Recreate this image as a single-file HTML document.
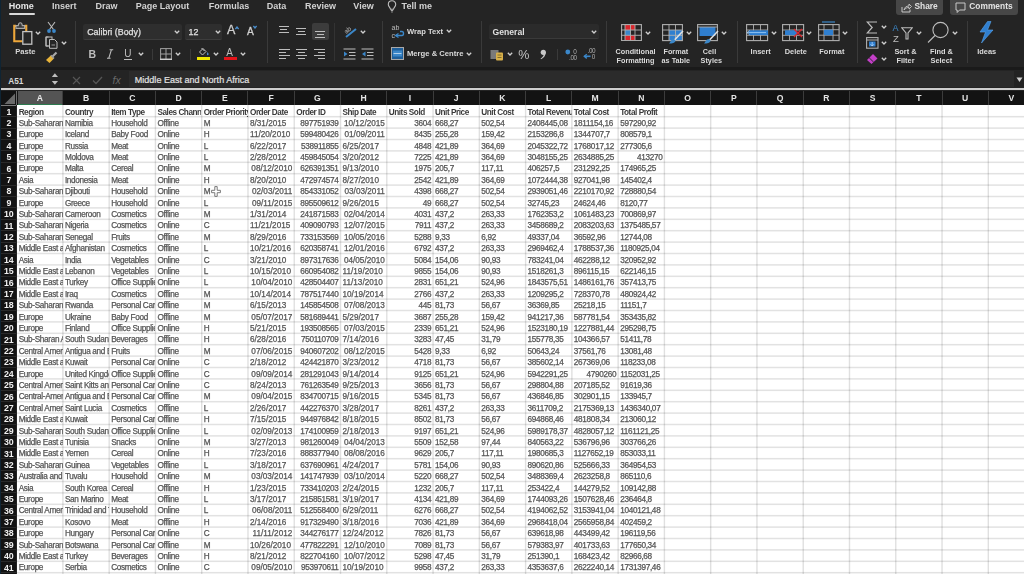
<!DOCTYPE html><html><head><meta charset="utf-8"><style>
*{margin:0;padding:0}
html,body{width:1024px;height:574px;overflow:hidden;background:#242424}
body{position:relative;font-family:"Liberation Sans",sans-serif}
#w{position:absolute;left:0;top:0;width:1030px;height:580px;overflow:hidden;filter:blur(0.3px)}
.r{position:absolute}
.t{position:absolute;white-space:nowrap;line-height:1}
.rh{font-size:8.8px;font-weight:700;color:#f0f0f0;text-align:center;letter-spacing:-0.2px}
.c{position:absolute;width:45.97px;height:11.40px;overflow:hidden;white-space:nowrap;font-size:8.2px;line-height:13.80px;color:#555;-webkit-text-stroke:0.25px #555;padding:0 1.6px 0 2px;box-sizing:border-box;letter-spacing:-0.32px}
.c.n{letter-spacing:-0.3px}
.c.d{letter-spacing:0px}
.c.b{font-weight:700;letter-spacing:-0.45px;color:#3a3a3a;-webkit-text-stroke:0;line-height:15.4px}
.c.rt{text-align:right}
</style></head><body><div id="w">
<div class="r" style="left:-6.00px;top:-6.00px;width:7.30px;height:590.00px;background:#0f2433;"></div>
<div class="t" style="left:8.80px;top:1.88px;font-size:9px;font-weight:700;color:#e6e6e6;">Home</div>
<div class="t" style="left:52.00px;top:1.88px;font-size:9px;font-weight:700;color:#d2d2d2;">Insert</div>
<div class="t" style="left:95.50px;top:1.88px;font-size:9px;font-weight:700;color:#d2d2d2;">Draw</div>
<div class="t" style="left:135.80px;top:1.88px;font-size:9px;font-weight:700;color:#d2d2d2;">Page Layout</div>
<div class="t" style="left:208.80px;top:1.88px;font-size:9px;font-weight:700;color:#d2d2d2;">Formulas</div>
<div class="t" style="left:266.70px;top:1.88px;font-size:9px;font-weight:700;color:#d2d2d2;">Data</div>
<div class="t" style="left:305.00px;top:1.88px;font-size:9px;font-weight:700;color:#d2d2d2;">Review</div>
<div class="t" style="left:353.30px;top:1.88px;font-size:9px;font-weight:700;color:#d2d2d2;">View</div>
<div class="t" style="left:401.60px;top:1.88px;font-size:9px;font-weight:700;color:#d2d2d2;">Tell me</div>
<div class="r" style="left:8.80px;top:12.80px;width:26.70px;height:1.80px;background:#d8d8d8;border-radius:1px"></div>
<svg class="r" style="left:387px;top:0px" width="10" height="13" viewBox="0 0 10 13"><path d="M5 0.8 C2.6 0.8 1.3 2.6 1.3 4.4 C1.3 6.3 3 7.4 3.5 9.2 L6.5 9.2 C7 7.4 8.7 6.3 8.7 4.4 C8.7 2.6 7.4 0.8 5 0.8 Z" fill="none" stroke="#bdbdbd" stroke-width="1.1"/><path d="M3.8 10.6 H6.2 M4.4 12 H5.6" stroke="#bdbdbd" stroke-width="1"/></svg>
<div class="r" style="left:895.50px;top:-3.00px;width:47.10px;height:17.80px;background:#474747;border-radius:3px"></div>
<svg class="r" style="left:901px;top:3px" width="11" height="10" viewBox="0 0 11 10"><path d="M1 4 V9 H9 V6.5" fill="none" stroke="#c8c8c8" stroke-width="1"/><path d="M3 7 C3.5 4.5 5 3 8 3 L8 1 L10.5 3.5 L8 6 L8 4.4 C6 4.4 4.5 5.3 3 7Z" fill="none" stroke="#c8c8c8" stroke-width="0.9"/></svg>
<div class="t" style="left:914.50px;top:2.49px;font-size:8.4px;font-weight:700;color:#e2e2e2;">Share</div>
<div class="r" style="left:949.60px;top:-3.00px;width:68.90px;height:17.80px;background:#474747;border-radius:3px"></div>
<svg class="r" style="left:955px;top:2px" width="11" height="12" viewBox="0 0 11 12"><path d="M1 1 H10 V8 H4.5 L2.2 10.5 V8 H1 Z" fill="none" stroke="#c8c8c8" stroke-width="1"/></svg>
<div class="t" style="left:969.30px;top:2.49px;font-size:8.4px;font-weight:700;color:#e2e2e2;">Comments</div>
<div class="r" style="left:74.50px;top:21.00px;width:1.00px;height:42.00px;background:#3a3a3a;"></div>
<div class="r" style="left:266.80px;top:21.00px;width:1.00px;height:42.00px;background:#3a3a3a;"></div>
<div class="r" style="left:382.30px;top:21.00px;width:1.00px;height:42.00px;background:#3a3a3a;"></div>
<div class="r" style="left:481.40px;top:21.00px;width:1.00px;height:42.00px;background:#3a3a3a;"></div>
<div class="r" style="left:606.30px;top:21.00px;width:1.00px;height:42.00px;background:#3a3a3a;"></div>
<div class="r" style="left:736.60px;top:21.00px;width:1.00px;height:42.00px;background:#3a3a3a;"></div>
<div class="r" style="left:856.70px;top:21.00px;width:1.00px;height:42.00px;background:#3a3a3a;"></div>
<div class="r" style="left:967.20px;top:21.00px;width:1.00px;height:42.00px;background:#3a3a3a;"></div>
<div class="r" style="left:334.20px;top:23.00px;width:1.00px;height:38.00px;background:#333333;"></div>
<div class="r" style="left:152.00px;top:49.00px;width:1.00px;height:11.00px;background:#3a3a3a;"></div>
<div class="r" style="left:189.80px;top:49.00px;width:1.00px;height:11.00px;background:#3a3a3a;"></div>
<div class="r" style="left:557.00px;top:49.00px;width:1.00px;height:11.00px;background:#3a3a3a;"></div>
<svg class="r" style="left:12px;top:21px" width="22" height="25" viewBox="0 0 22 25"><path d="M4 4.9 H2.25 V20.25 H10.5" fill="none" stroke="#eea73a" stroke-width="2.1"/><path d="M12.5 4.9 H14.25 V10.5" fill="none" stroke="#eea73a" stroke-width="2.1"/><path d="M4 7.4 V4.6 H6.3 C6.5 2.6 7.3 1.8 8.3 1.8 C9.3 1.8 10.1 2.6 10.3 4.6 H12.6 V7.4 Z" fill="#3a3a3a" stroke="#a8a8a8" stroke-width="1.1"/><rect x="10.8" y="10.6" width="9" height="12.6" fill="#262626" stroke="#c4c4c4" stroke-width="1.3"/></svg>
<svg class="r" style="left:34.8px;top:31px" width="6" height="4" viewBox="0 0 6 4"><path d="M0.8 0.8 L3 3 L5.2 0.8" fill="none" stroke="#cfcfcf" stroke-width="1.3"/></svg>
<div class="t" style="left:15.20px;top:48.37px;font-size:7.6px;font-weight:700;color:#d6d6d6;">Paste</div>
<svg class="r" style="left:46px;top:21px" width="11" height="13" viewBox="0 0 11 13"><path d="M2 1 L7.5 8.5 M9 1 L3.5 8.5" stroke="#bdbdbd" stroke-width="1.1" fill="none"/><circle cx="3" cy="10" r="1.9" fill="#3b87c9"/><circle cx="8" cy="10" r="1.9" fill="#3b87c9"/></svg>
<svg class="r" style="left:45px;top:36px" width="13" height="13" viewBox="0 0 13 13"><path d="M3.5 1 H1 V10 H3.5" fill="none" stroke="#bdbdbd" stroke-width="1"/><rect x="1" y="1" width="6" height="9" fill="none" stroke="#bdbdbd" stroke-width="1"/><path d="M4.5 3.5 H9.5 L12 6 V12.3 H4.5 Z" fill="#262626" stroke="#bdbdbd" stroke-width="1"/><path d="M6.5 9 H10" stroke="#9a9a9a" stroke-width="1"/></svg>
<svg class="r" style="left:60.6px;top:40.7px" width="6" height="4" viewBox="0 0 6 4"><path d="M0.8 0.8 L3 3 L5.2 0.8" fill="none" stroke="#cfcfcf" stroke-width="1.3"/></svg>
<svg class="r" style="left:45px;top:51px" width="13" height="13" viewBox="0 0 13 13"><path d="M7.5 5.5 L11.5 1.5" stroke="#a8a8a8" stroke-width="2.2"/><path d="M1 9 L6 4.2 L9 7.5 L4.5 12 Z" fill="#e8b43a"/><path d="M6 4.2 L9 7.5" stroke="#9a9a9a" stroke-width="1.5"/></svg>
<div class="r" style="left:82.70px;top:23.80px;width:99.60px;height:16.20px;background:#2e2e2e;border-bottom:1px solid #3d3d3d;box-sizing:border-box;border-radius:2px"></div>
<div class="t" style="left:87.20px;top:27.97px;font-size:8.9px;font-weight:400;color:#e0e0e0;-webkit-text-stroke:0.25px #e0e0e0">Calibri (Body)</div>
<svg class="r" style="left:174.4px;top:30.299999999999997px" width="6" height="4" viewBox="0 0 6 4"><path d="M0.8 0.8 L3 3 L5.2 0.8" fill="none" stroke="#cfcfcf" stroke-width="1.3"/></svg>
<div class="r" style="left:185.20px;top:23.80px;width:37.10px;height:16.20px;background:#2e2e2e;border-bottom:1px solid #3d3d3d;box-sizing:border-box;border-radius:2px"></div>
<div class="t" style="left:188.60px;top:27.97px;font-size:8.9px;font-weight:400;color:#e0e0e0;-webkit-text-stroke:0.25px #e0e0e0">12</div>
<svg class="r" style="left:214.6px;top:30.299999999999997px" width="6" height="4" viewBox="0 0 6 4"><path d="M0.8 0.8 L3 3 L5.2 0.8" fill="none" stroke="#cfcfcf" stroke-width="1.3"/></svg>
<div class="t" style="left:227.00px;top:24.42px;font-size:12.5px;font-weight:400;color:#d0d0d0;-webkit-text-stroke:0.3px #d0d0d0">A</div>
<svg class="r" style="left:234.5px;top:25.5px" width="4" height="4" viewBox="0 0 4 4"><path d="M0.4 3 L2 1 L3.6 3" fill="none" stroke="#4a90d0" stroke-width="1.3"/></svg>
<div class="t" style="left:247.00px;top:26.57px;font-size:10.2px;font-weight:400;color:#d0d0d0;-webkit-text-stroke:0.3px #d0d0d0">A</div>
<svg class="r" style="left:253.3px;top:25.2px" width="4" height="4" viewBox="0 0 4 4"><path d="M0.4 1 L2 3 L3.6 1" fill="none" stroke="#4a90d0" stroke-width="1.3"/></svg>
<div class="t" style="left:88.40px;top:48.91px;font-size:10.5px;font-weight:700;color:#bdbdbd;">B</div>
<svg class="r" style="left:106px;top:49px" width="8" height="10" viewBox="0 0 8 10"><path d="M3.6 0.8 H7.2 M1 9.2 H4.6 M5.4 0.8 L2.8 9.2" fill="none" stroke="#bdbdbd" stroke-width="1.1"/></svg>
<div class="t" style="left:124.30px;top:48.53px;font-size:10px;font-weight:400;color:#bdbdbd;">U</div>
<div class="r" style="left:124.00px;top:58.50px;width:7.50px;height:1.00px;background:#bdbdbd;"></div>
<svg class="r" style="left:137.6px;top:52.3px" width="6" height="4" viewBox="0 0 6 4"><path d="M0.8 0.8 L3 3 L5.2 0.8" fill="none" stroke="#cfcfcf" stroke-width="1.3"/></svg>
<svg class="r" style="left:159.5px;top:48px" width="12" height="12" viewBox="0 0 12 12"><rect x="0.6" y="0.6" width="10.8" height="10.8" fill="none" stroke="#a0a0a0" stroke-width="1"/><path d="M6 0.6 V11.4 M0.6 6 H11.4" stroke="#a0a0a0" stroke-width="1"/><path d="M0 11.3 H12" stroke="#d0d0d0" stroke-width="1.4"/></svg>
<svg class="r" style="left:175.4px;top:52.3px" width="6" height="4" viewBox="0 0 6 4"><path d="M0.8 0.8 L3 3 L5.2 0.8" fill="none" stroke="#cfcfcf" stroke-width="1.3"/></svg>
<svg class="r" style="left:198px;top:47px" width="12" height="10" viewBox="0 0 12 10"><path d="M5 1.5 L1.5 5 L4.5 8 L8 4.5 Z" fill="none" stroke="#bdbdbd" stroke-width="1"/><path d="M3.5 1 L6.5 4" stroke="#bdbdbd" stroke-width="1"/><path d="M9.5 5 C10.5 6.5 11 7.2 10.2 8 C9.6 8.5 8.8 8 9 7 Z" fill="#4f95d8"/></svg>
<div class="r" style="left:197.40px;top:57.00px;width:12.30px;height:3.00px;background:#f0e800;"></div>
<svg class="r" style="left:213.2px;top:52.3px" width="6" height="4" viewBox="0 0 6 4"><path d="M0.8 0.8 L3 3 L5.2 0.8" fill="none" stroke="#cfcfcf" stroke-width="1.3"/></svg>
<div class="t" style="left:226.20px;top:48.03px;font-size:10px;font-weight:400;color:#bdbdbd;">A</div>
<div class="r" style="left:224.00px;top:57.00px;width:13.00px;height:3.00px;background:#e5141a;"></div>
<svg class="r" style="left:240.4px;top:52.3px" width="6" height="4" viewBox="0 0 6 4"><path d="M0.8 0.8 L3 3 L5.2 0.8" fill="none" stroke="#cfcfcf" stroke-width="1.3"/></svg>
<div class="r" style="left:312.20px;top:23.20px;width:16.50px;height:16.50px;background:#3c3c3c;border-radius:2px"></div>
<div class="r" style="left:278.50px;top:25.50px;width:10.00px;height:1.10px;background:#bdbdbd;"></div><div class="r" style="left:280.00px;top:28.70px;width:7.00px;height:1.10px;background:#bdbdbd;"></div><div class="r" style="left:278.50px;top:31.90px;width:10.00px;height:1.10px;background:#bdbdbd;"></div>
<div class="r" style="left:296.00px;top:28.00px;width:10.00px;height:1.10px;background:#bdbdbd;"></div><div class="r" style="left:297.50px;top:31.20px;width:7.00px;height:1.10px;background:#bdbdbd;"></div><div class="r" style="left:296.00px;top:34.40px;width:10.00px;height:1.10px;background:#bdbdbd;"></div>
<div class="r" style="left:315.00px;top:30.50px;width:10.00px;height:1.10px;background:#bdbdbd;"></div><div class="r" style="left:316.50px;top:33.70px;width:7.00px;height:1.10px;background:#bdbdbd;"></div><div class="r" style="left:315.00px;top:36.90px;width:10.00px;height:1.10px;background:#bdbdbd;"></div>
<div class="r" style="left:278.50px;top:48.50px;width:11.00px;height:1.10px;background:#bdbdbd;"></div><div class="r" style="left:278.50px;top:51.70px;width:7.00px;height:1.10px;background:#bdbdbd;"></div><div class="r" style="left:278.50px;top:54.90px;width:11.00px;height:1.10px;background:#bdbdbd;"></div><div class="r" style="left:278.50px;top:58.10px;width:7.00px;height:1.10px;background:#bdbdbd;"></div>
<div class="r" style="left:296.00px;top:48.50px;width:11.00px;height:1.10px;background:#bdbdbd;"></div><div class="r" style="left:298.00px;top:51.70px;width:7.00px;height:1.10px;background:#bdbdbd;"></div><div class="r" style="left:296.00px;top:54.90px;width:11.00px;height:1.10px;background:#bdbdbd;"></div><div class="r" style="left:298.00px;top:58.10px;width:7.00px;height:1.10px;background:#bdbdbd;"></div>
<div class="r" style="left:313.50px;top:48.50px;width:11.00px;height:1.10px;background:#bdbdbd;"></div><div class="r" style="left:317.50px;top:51.70px;width:7.00px;height:1.10px;background:#bdbdbd;"></div><div class="r" style="left:313.50px;top:54.90px;width:11.00px;height:1.10px;background:#bdbdbd;"></div><div class="r" style="left:317.50px;top:58.10px;width:7.00px;height:1.10px;background:#bdbdbd;"></div>
<svg class="r" style="left:343px;top:24px" width="15" height="15" viewBox="0 0 15 15"><text x="1" y="8" font-family="Liberation Sans" font-size="6.5" fill="#bdbdbd" transform="rotate(-40 5 6)">ab</text><path d="M3 13 L13 5" stroke="#3b87c9" stroke-width="2"/></svg>
<svg class="r" style="left:359.5px;top:29.5px" width="6" height="4" viewBox="0 0 6 4"><path d="M0.8 0.8 L3 3 L5.2 0.8" fill="none" stroke="#cfcfcf" stroke-width="1.3"/></svg>
<svg class="r" style="left:343px;top:48px" width="13" height="12" viewBox="0 0 13 12"><path d="M0.5 1 H12.5 M6 4.5 H12.5 M6 7.5 H12.5 M0.5 11 H12.5" stroke="#bdbdbd" stroke-width="1.1"/><path d="M4.5 6 L1 3.5 V8.5Z" fill="#3b87c9"/></svg>
<svg class="r" style="left:361px;top:48px" width="13" height="12" viewBox="0 0 13 12"><path d="M0.5 1 H12.5 M6 4.5 H12.5 M6 7.5 H12.5 M0.5 11 H12.5" stroke="#bdbdbd" stroke-width="1.1"/><path d="M1 6 L4.5 3.5 V8.5Z" fill="#3b87c9"/></svg>
<svg class="r" style="left:391px;top:23px" width="14" height="17" viewBox="0 0 14 17"><text x="0.5" y="7" font-family="Liberation Sans" font-size="7" fill="#bdbdbd">ab</text><text x="0.5" y="15" font-family="Liberation Sans" font-size="7" fill="#bdbdbd">c</text><path d="M5 12.5 H11 C13 12.5 13 8.5 11 8.5 H9" fill="none" stroke="#3b87c9" stroke-width="1.4"/><path d="M7.5 10.5 L4.5 12.5 L7.5 14.5" fill="none" stroke="#3b87c9" stroke-width="1.3"/></svg>
<div class="t" style="left:407.00px;top:27.57px;font-size:7.6px;font-weight:700;color:#dadada;">Wrap Text</div>
<svg class="r" style="left:446px;top:29.2px" width="6" height="4" viewBox="0 0 6 4"><path d="M0.8 0.8 L3 3 L5.2 0.8" fill="none" stroke="#cfcfcf" stroke-width="1.3"/></svg>
<svg class="r" style="left:391px;top:47px" width="13" height="13" viewBox="0 0 13 13"><rect x="0.5" y="0.5" width="12" height="12" fill="#1f5f9a" stroke="#a9a9a9" stroke-width="1"/><rect x="2" y="3.5" width="9" height="6" fill="#3b87c9"/><path d="M2.5 6.5 H10.5" stroke="#cfe3f5" stroke-width="0.8"/></svg>
<div class="t" style="left:407.00px;top:50.22px;font-size:7.65px;font-weight:700;color:#dadada;">Merge &amp; Centre</div>
<svg class="r" style="left:466px;top:52px" width="6" height="4" viewBox="0 0 6 4"><path d="M0.8 0.8 L3 3 L5.2 0.8" fill="none" stroke="#cfcfcf" stroke-width="1.3"/></svg>
<div class="r" style="left:489.00px;top:23.80px;width:110.00px;height:15.40px;background:#2b2b2b;border-bottom:1px solid #3a3a3a;box-sizing:border-box;border-radius:2px"></div>
<div class="t" style="left:492.60px;top:27.52px;font-size:8.6px;font-weight:700;color:#e0e0e0;">General</div>
<svg class="r" style="left:590.5px;top:29.5px" width="6" height="4" viewBox="0 0 6 4"><path d="M0.8 0.8 L3 3 L5.2 0.8" fill="none" stroke="#cfcfcf" stroke-width="1.3"/></svg>
<svg class="r" style="left:490px;top:49px" width="15" height="12" viewBox="0 0 15 12"><rect x="0.5" y="1" width="8" height="9" fill="#7a7a7a"/><rect x="6" y="3.5" width="7" height="8" rx="1" fill="#d8b04a"/><path d="M7.5 6 H11.5 M7.5 8.5 H11.5" stroke="#6b5a20" stroke-width="0.8"/></svg>
<svg class="r" style="left:507px;top:52px" width="6" height="4" viewBox="0 0 6 4"><path d="M0.8 0.8 L3 3 L5.2 0.8" fill="none" stroke="#cfcfcf" stroke-width="1.3"/></svg>
<div class="t" style="left:518.30px;top:48.82px;font-size:12.5px;font-weight:400;color:#c2c2c2;">%</div>
<svg class="r" style="left:539px;top:49px" width="8" height="11" viewBox="0 0 8 11"><circle cx="4.3" cy="3.3" r="2.6" fill="#c8c8c8"/><path d="M6.6 3.3 C6.8 6.5 5 9 2 10.3 L1.6 9.4 C3.8 8.2 4.8 6.5 4.8 4.5 Z" fill="#c8c8c8"/></svg>
<svg class="r" style="left:564px;top:48px" width="15" height="13" viewBox="0 0 15 13"><circle cx="3.8" cy="4" r="2.4" fill="#3b87c9"/><text x="9.2" y="6.2" font-family="Liberation Sans" font-size="6.4" fill="#b0b0b0">0</text><text x="5" y="11.6" font-family="Liberation Sans" font-size="6.4" fill="#b0b0b0" letter-spacing="-0.4">.00</text></svg>
<svg class="r" style="left:583px;top:47px" width="15" height="14" viewBox="0 0 15 14"><text x="4.5" y="6.4" font-family="Liberation Sans" font-size="6.4" fill="#b0b0b0" letter-spacing="-0.4">.00</text><text x="8.8" y="12" font-family="Liberation Sans" font-size="6.4" fill="#b0b0b0">0</text><path d="M1.5 9.3 H7.5" stroke="#3b87c9" stroke-width="1.6"/><path d="M3.8 7.2 L1.3 9.3 L3.8 11.4" fill="none" stroke="#3b87c9" stroke-width="1.4"/></svg>
<svg class="r" style="left:620.5px;top:24px" width="21" height="17" viewBox="0 0 21 17"><rect x="4" y="1" width="10" height="5" fill="#d9262c"/><rect x="4" y="11.3" width="10" height="5" fill="#d9262c"/><rect x="4" y="6" width="5.5" height="5.3" fill="#3b87c9"/><rect x="0.6" y="0.6" width="19.8" height="16" fill="none" stroke="#b0b0b0" stroke-width="1.1"/><path d="M4 0.6 V16.6 M9.5 0.6 V16.6 M14 0.6 V16.6 M0.6 6 H20.4 M0.6 11.3 H20.4" stroke="#b0b0b0" stroke-width="0.9"/></svg>
<svg class="r" style="left:645px;top:31px" width="6" height="4" viewBox="0 0 6 4"><path d="M0.8 0.8 L3 3 L5.2 0.8" fill="none" stroke="#cfcfcf" stroke-width="1.3"/></svg>
<div class="t" style="left:575.50px;width:120px;text-align:center;top:48.36px;font-size:7.25px;font-weight:700;color:#dadada;">Conditional</div>
<div class="t" style="left:575.50px;width:120px;text-align:center;top:56.66px;font-size:7.25px;font-weight:700;color:#dadada;">Formatting</div>
<svg class="r" style="left:661.5px;top:24px" width="23" height="21" viewBox="0 0 23 21"><rect x="7" y="6" width="13" height="10.6" fill="#2f7fd0"/><rect x="0.6" y="0.6" width="19.8" height="16" fill="none" stroke="#b0b0b0" stroke-width="1.1"/><path d="M7 0.6 V16.6 M13.5 0.6 V16.6 M0.6 6 H20.4 M0.6 11.3 H20.4" stroke="#b0b0b0" stroke-width="0.9"/><path d="M21 7 L12.5 16" stroke="#e0e0e0" stroke-width="1.6"/><path d="M12 15 C9 15 8.5 18 7 19.5 C10 19.5 13.5 19 13.5 16.5 Z" fill="#3b87c9"/></svg>
<svg class="r" style="left:686px;top:31px" width="6" height="4" viewBox="0 0 6 4"><path d="M0.8 0.8 L3 3 L5.2 0.8" fill="none" stroke="#cfcfcf" stroke-width="1.3"/></svg>
<div class="t" style="left:615.80px;width:120px;text-align:center;top:48.36px;font-size:7.25px;font-weight:700;color:#dadada;">Format</div>
<div class="t" style="left:615.80px;width:120px;text-align:center;top:56.66px;font-size:7.25px;font-weight:700;color:#dadada;">as Table</div>
<svg class="r" style="left:697px;top:24px" width="23" height="21" viewBox="0 0 23 21"><rect x="2.5" y="3" width="16" height="9" fill="#2f7fd0"/><rect x="0.6" y="0.6" width="19.8" height="16" fill="none" stroke="#b0b0b0" stroke-width="1.1"/><path d="M0.6 3 H20.4" stroke="#b0b0b0" stroke-width="0.9"/><path d="M21 7 L12.5 16" stroke="#e0e0e0" stroke-width="1.6"/><path d="M12 15 C9 15 8.5 18 7 19.5 C10 19.5 13.5 19 13.5 16.5 Z" fill="#3b87c9"/></svg>
<svg class="r" style="left:721px;top:31px" width="6" height="4" viewBox="0 0 6 4"><path d="M0.8 0.8 L3 3 L5.2 0.8" fill="none" stroke="#cfcfcf" stroke-width="1.3"/></svg>
<div class="t" style="left:649.50px;width:120px;text-align:center;top:48.36px;font-size:7.25px;font-weight:700;color:#dadada;">Cell</div>
<div class="t" style="left:651.30px;width:120px;text-align:center;top:56.66px;font-size:7.25px;font-weight:700;color:#dadada;">Styles</div>
<svg class="r" style="left:745.7px;top:24px" width="23" height="18" viewBox="0 0 23 18"><rect x="0.6" y="0.6" width="21" height="16" fill="none" stroke="#b0b0b0" stroke-width="1.1"/><path d="M7.5 0.6 V16.6 M14.5 0.6 V16.6 M0.6 6 H21.6 M0.6 11.3 H21.6" stroke="#b0b0b0" stroke-width="0.9"/><rect x="3" y="6.3" width="19" height="4.8" fill="#2f7fd0"/><path d="M1 8.6 H20" stroke="#9ccaf5" stroke-width="0.9"/><path d="M3.5 6.5 L1 8.6 L3.5 10.7" fill="none" stroke="#9ccaf5" stroke-width="0.9"/></svg>
<svg class="r" style="left:771px;top:31px" width="6" height="4" viewBox="0 0 6 4"><path d="M0.8 0.8 L3 3 L5.2 0.8" fill="none" stroke="#cfcfcf" stroke-width="1.3"/></svg>
<div class="t" style="left:700.70px;width:120px;text-align:center;top:48.24px;font-size:7.4px;font-weight:700;color:#dadada;">Insert</div>
<svg class="r" style="left:782px;top:24px" width="23" height="18" viewBox="0 0 23 18"><rect x="0.6" y="0.6" width="21" height="16" fill="none" stroke="#b0b0b0" stroke-width="1.1"/><path d="M7.5 0.6 V16.6 M14.5 0.6 V16.6 M0.6 6 H21.6 M0.6 11.3 H21.6" stroke="#b0b0b0" stroke-width="0.9"/><rect x="3" y="6.3" width="12" height="4.8" fill="#2f7fd0"/><path d="M12 5 L20 13 M20 5 L12 13" stroke="#d9262c" stroke-width="1.4"/></svg>
<svg class="r" style="left:806px;top:31px" width="6" height="4" viewBox="0 0 6 4"><path d="M0.8 0.8 L3 3 L5.2 0.8" fill="none" stroke="#cfcfcf" stroke-width="1.3"/></svg>
<div class="t" style="left:735.80px;width:120px;text-align:center;top:48.24px;font-size:7.4px;font-weight:700;color:#dadada;">Delete</div>
<svg class="r" style="left:817.5px;top:21px" width="22" height="21" viewBox="0 0 22 21"><path d="M4 1 H17" stroke="#3b87c9" stroke-width="1.2"/><rect x="0.6" y="3.6" width="20.5" height="16" fill="none" stroke="#b0b0b0" stroke-width="1.1"/><path d="M6 3.6 V19.6 M15 3.6 V19.6 M0.6 8.7 H21.1 M0.6 14.2 H21.1" stroke="#b0b0b0" stroke-width="0.9"/><rect x="6" y="8.7" width="9" height="5.5" fill="#2f7fd0"/></svg>
<svg class="r" style="left:842px;top:31px" width="6" height="4" viewBox="0 0 6 4"><path d="M0.8 0.8 L3 3 L5.2 0.8" fill="none" stroke="#cfcfcf" stroke-width="1.3"/></svg>
<div class="t" style="left:771.90px;width:120px;text-align:center;top:48.24px;font-size:7.4px;font-weight:700;color:#dadada;">Format</div>
<svg class="r" style="left:866px;top:20.5px" width="12" height="13" viewBox="0 0 12 13"><path d="M11 1 H1.2 L6.2 6.5 L1.2 12 H11" fill="none" stroke="#bdbdbd" stroke-width="1.2" stroke-linejoin="miter"/></svg>
<svg class="r" style="left:881px;top:25px" width="6" height="4" viewBox="0 0 6 4"><path d="M0.8 0.8 L3 3 L5.2 0.8" fill="none" stroke="#cfcfcf" stroke-width="1.3"/></svg>
<svg class="r" style="left:866px;top:37px" width="13" height="12" viewBox="0 0 13 12"><rect x="0.6" y="0.6" width="11.4" height="10.6" fill="none" stroke="#b0b0b0" stroke-width="1.1"/><path d="M0.6 3 H12" stroke="#b0b0b0" stroke-width="1"/><rect x="3" y="4.5" width="6.5" height="5" fill="#2f7fd0"/><path d="M6.2 5 V9 M4.5 7.2 L6.2 9 L8 7.2" stroke="#bfe0ff" stroke-width="0.7" fill="none"/></svg>
<svg class="r" style="left:881px;top:41px" width="6" height="4" viewBox="0 0 6 4"><path d="M0.8 0.8 L3 3 L5.2 0.8" fill="none" stroke="#cfcfcf" stroke-width="1.3"/></svg>
<svg class="r" style="left:865.5px;top:52px" width="13" height="12" viewBox="0 0 13 12"><path d="M1 8 L7 2 L11.5 6.5 L5.5 12 Z" fill="#c43fc8"/><path d="M3.2 5.8 L7.7 10.2" stroke="#262626" stroke-width="0.9"/></svg>
<svg class="r" style="left:881px;top:57px" width="6" height="4" viewBox="0 0 6 4"><path d="M0.8 0.8 L3 3 L5.2 0.8" fill="none" stroke="#cfcfcf" stroke-width="1.3"/></svg>
<div class="t" style="left:892.50px;top:23.58px;font-size:9px;font-weight:400;color:#3b87c9;">A</div>
<div class="t" style="left:893.00px;top:34.16px;font-size:9.5px;font-weight:400;color:#bdbdbd;">Z</div>
<svg class="r" style="left:900.5px;top:27px" width="12" height="13" viewBox="0 0 12 13"><path d="M0.8 0.8 H11.2 L7 6 V12 H5 V6 Z" fill="none" stroke="#bdbdbd" stroke-width="1.1"/></svg>
<svg class="r" style="left:916px;top:31px" width="6" height="4" viewBox="0 0 6 4"><path d="M0.8 0.8 L3 3 L5.2 0.8" fill="none" stroke="#cfcfcf" stroke-width="1.3"/></svg>
<div class="t" style="left:845.50px;width:120px;text-align:center;top:48.24px;font-size:7.4px;font-weight:700;color:#dadada;">Sort &amp;</div>
<div class="t" style="left:845.50px;width:120px;text-align:center;top:56.54px;font-size:7.4px;font-weight:700;color:#dadada;">Filter</div>
<svg class="r" style="left:926px;top:21px" width="24" height="24" viewBox="0 0 24 24"><circle cx="14.5" cy="9" r="7.6" fill="none" stroke="#bdbdbd" stroke-width="1.1"/><path d="M9 14.5 L2 21.5" stroke="#bdbdbd" stroke-width="1.1"/></svg>
<svg class="r" style="left:952px;top:31px" width="6" height="4" viewBox="0 0 6 4"><path d="M0.8 0.8 L3 3 L5.2 0.8" fill="none" stroke="#cfcfcf" stroke-width="1.3"/></svg>
<div class="t" style="left:881.40px;width:120px;text-align:center;top:48.24px;font-size:7.4px;font-weight:700;color:#dadada;">Find &amp;</div>
<div class="t" style="left:881.40px;width:120px;text-align:center;top:56.54px;font-size:7.4px;font-weight:700;color:#dadada;">Select</div>
<svg class="r" style="left:978px;top:21px" width="17" height="23" viewBox="0 0 17 23"><path d="M9.5 0.5 L2 11 H7.5 L3.5 22 L15 9 H9.5 L13 0.5 Z" fill="#2f7fd0"/><path d="M9.5 0.5 L2 11 H7.5 L3.5 22 L15 9 H9.5 L13 0.5 Z" fill="none" stroke="#5aa6ec" stroke-width="0.6"/></svg>
<div class="t" style="left:926.70px;width:120px;text-align:center;top:48.24px;font-size:7.4px;font-weight:700;color:#dadada;">Ideas</div>
<div class="r" style="left:1.30px;top:66.80px;width:1023.00px;height:3.60px;background:#1a1a1a;"></div>
<div class="r" style="left:1.30px;top:70.40px;width:1023.00px;height:18.00px;background:#242424;"></div>
<div class="t" style="left:8.20px;top:76.57px;font-size:8.3px;font-weight:700;color:#d8d8d8;">A51</div>
<svg class="r" style="left:51px;top:72px" width="8" height="14" viewBox="0 0 8 14"><path d="M0.8 5 L3.9 1.2 L7 5 Z" fill="#bdbdbd"/><path d="M0.8 9 L3.9 12.8 L7 9 Z" fill="#bdbdbd"/></svg>
<svg class="r" style="left:71.5px;top:75.5px" width="9" height="9" viewBox="0 0 9 9"><path d="M1 1 L8 8 M8 1 L1 8" stroke="#555" stroke-width="1.2"/></svg>
<svg class="r" style="left:91.5px;top:75.5px" width="11" height="9" viewBox="0 0 11 9"><path d="M1 4.5 L4 7.5 L10 1" fill="none" stroke="#555" stroke-width="1.3"/></svg>
<div class="t" style="left:112.60px;top:75.11px;font-size:10.5px;font-weight:400;color:#6a6a6a;font-family:"Liberation Serif""><i>fx</i></div>
<div class="r" style="left:129.30px;top:70.80px;width:885.00px;height:16.60px;background:#2b2b2b;"></div>
<div class="t" style="left:134.80px;top:75.75px;font-size:9.04px;font-weight:400;color:#e2e2e2;-webkit-text-stroke:0.2px #e2e2e2">Middle East and North Africa</div>
<div class="r" style="left:1014.20px;top:70.80px;width:9.80px;height:16.60px;background:#232323;"></div>
<svg class="r" style="left:1016px;top:77px" width="7" height="6" viewBox="0 0 7 6"><path d="M0.5 0.5 H6.5 L3.5 5 Z" fill="#cfcfcf"/></svg>
<div class="r" style="left:1.30px;top:88.40px;width:1023.00px;height:2.10px;background:#cdcdcd;"></div>
<div class="r" style="left:1.30px;top:90.50px;width:1023.00px;height:14.80px;background:#131313;"></div>
<div class="r" style="left:17.50px;top:90.50px;width:45.40px;height:13.30px;background:#545454;"></div>
<div class="r" style="left:17.50px;top:103.60px;width:45.40px;height:2.00px;background:#2d7a4f;"></div>
<svg class="r" style="left:1.3px;top:90.5px" width="15" height="14.5" viewBox="0 0 15 14.5"><path d="M3.5 13 L14 2.5 V13 Z" fill="#6a6a6a"/></svg>
<div class="r" style="left:16.20px;top:90.50px;width:1.30px;height:14.80px;background:#6d6d6d;"></div>
<div class="t" style="left:-20.23px;width:120px;text-align:center;top:94.32px;font-size:8.6px;font-weight:700;color:#e8e8e8;">A</div>
<div class="r" style="left:62.40px;top:90.50px;width:1.00px;height:14.80px;background:#3c3c3c;"></div>
<div class="t" style="left:26.04px;width:120px;text-align:center;top:94.32px;font-size:8.6px;font-weight:700;color:#e4e4e4;">B</div>
<div class="r" style="left:108.67px;top:90.50px;width:1.00px;height:14.80px;background:#3c3c3c;"></div>
<div class="t" style="left:72.31px;width:120px;text-align:center;top:94.32px;font-size:8.6px;font-weight:700;color:#e4e4e4;">C</div>
<div class="r" style="left:154.94px;top:90.50px;width:1.00px;height:14.80px;background:#3c3c3c;"></div>
<div class="t" style="left:118.57px;width:120px;text-align:center;top:94.32px;font-size:8.6px;font-weight:700;color:#e4e4e4;">D</div>
<div class="r" style="left:201.21px;top:90.50px;width:1.00px;height:14.80px;background:#3c3c3c;"></div>
<div class="t" style="left:164.84px;width:120px;text-align:center;top:94.32px;font-size:8.6px;font-weight:700;color:#e4e4e4;">E</div>
<div class="r" style="left:247.48px;top:90.50px;width:1.00px;height:14.80px;background:#3c3c3c;"></div>
<div class="t" style="left:211.12px;width:120px;text-align:center;top:94.32px;font-size:8.6px;font-weight:700;color:#e4e4e4;">F</div>
<div class="r" style="left:293.75px;top:90.50px;width:1.00px;height:14.80px;background:#3c3c3c;"></div>
<div class="t" style="left:257.38px;width:120px;text-align:center;top:94.32px;font-size:8.6px;font-weight:700;color:#e4e4e4;">G</div>
<div class="r" style="left:340.02px;top:90.50px;width:1.00px;height:14.80px;background:#3c3c3c;"></div>
<div class="t" style="left:303.66px;width:120px;text-align:center;top:94.32px;font-size:8.6px;font-weight:700;color:#e4e4e4;">H</div>
<div class="r" style="left:386.29px;top:90.50px;width:1.00px;height:14.80px;background:#3c3c3c;"></div>
<div class="t" style="left:349.93px;width:120px;text-align:center;top:94.32px;font-size:8.6px;font-weight:700;color:#e4e4e4;">I</div>
<div class="r" style="left:432.56px;top:90.50px;width:1.00px;height:14.80px;background:#3c3c3c;"></div>
<div class="t" style="left:396.19px;width:120px;text-align:center;top:94.32px;font-size:8.6px;font-weight:700;color:#e4e4e4;">J</div>
<div class="r" style="left:478.83px;top:90.50px;width:1.00px;height:14.80px;background:#3c3c3c;"></div>
<div class="t" style="left:442.47px;width:120px;text-align:center;top:94.32px;font-size:8.6px;font-weight:700;color:#e4e4e4;">K</div>
<div class="r" style="left:525.10px;top:90.50px;width:1.00px;height:14.80px;background:#3c3c3c;"></div>
<div class="t" style="left:488.74px;width:120px;text-align:center;top:94.32px;font-size:8.6px;font-weight:700;color:#e4e4e4;">L</div>
<div class="r" style="left:571.37px;top:90.50px;width:1.00px;height:14.80px;background:#3c3c3c;"></div>
<div class="t" style="left:535.00px;width:120px;text-align:center;top:94.32px;font-size:8.6px;font-weight:700;color:#e4e4e4;">M</div>
<div class="r" style="left:617.64px;top:90.50px;width:1.00px;height:14.80px;background:#3c3c3c;"></div>
<div class="t" style="left:581.27px;width:120px;text-align:center;top:94.32px;font-size:8.6px;font-weight:700;color:#e4e4e4;">N</div>
<div class="r" style="left:663.91px;top:90.50px;width:1.00px;height:14.80px;background:#3c3c3c;"></div>
<div class="t" style="left:627.55px;width:120px;text-align:center;top:94.32px;font-size:8.6px;font-weight:700;color:#e4e4e4;">O</div>
<div class="r" style="left:710.18px;top:90.50px;width:1.00px;height:14.80px;background:#3c3c3c;"></div>
<div class="t" style="left:673.82px;width:120px;text-align:center;top:94.32px;font-size:8.6px;font-weight:700;color:#e4e4e4;">P</div>
<div class="r" style="left:756.45px;top:90.50px;width:1.00px;height:14.80px;background:#3c3c3c;"></div>
<div class="t" style="left:720.09px;width:120px;text-align:center;top:94.32px;font-size:8.6px;font-weight:700;color:#e4e4e4;">Q</div>
<div class="r" style="left:802.72px;top:90.50px;width:1.00px;height:14.80px;background:#3c3c3c;"></div>
<div class="t" style="left:766.36px;width:120px;text-align:center;top:94.32px;font-size:8.6px;font-weight:700;color:#e4e4e4;">R</div>
<div class="r" style="left:848.99px;top:90.50px;width:1.00px;height:14.80px;background:#3c3c3c;"></div>
<div class="t" style="left:812.62px;width:120px;text-align:center;top:94.32px;font-size:8.6px;font-weight:700;color:#e4e4e4;">S</div>
<div class="r" style="left:895.26px;top:90.50px;width:1.00px;height:14.80px;background:#3c3c3c;"></div>
<div class="t" style="left:858.90px;width:120px;text-align:center;top:94.32px;font-size:8.6px;font-weight:700;color:#e4e4e4;">T</div>
<div class="r" style="left:941.53px;top:90.50px;width:1.00px;height:14.80px;background:#3c3c3c;"></div>
<div class="t" style="left:905.17px;width:120px;text-align:center;top:94.32px;font-size:8.6px;font-weight:700;color:#e4e4e4;">U</div>
<div class="r" style="left:987.80px;top:90.50px;width:1.00px;height:14.80px;background:#3c3c3c;"></div>
<div class="t" style="left:951.44px;width:120px;text-align:center;top:94.32px;font-size:8.6px;font-weight:700;color:#e4e4e4;">V</div>
<div class="r" style="left:1034.07px;top:90.50px;width:1.00px;height:14.80px;background:#3c3c3c;"></div>
<div class="r" style="left:16.50px;top:105.30px;width:1024.00px;height:474.70px;background:#ffffff;"></div>
<div class="r" style="left:1.30px;top:105.30px;width:15.20px;height:474.70px;background:#131313;"></div>
<div class="r" style="left:1.30px;top:105.10px;width:15.00px;height:1.20px;background:#7a7a7a;"></div>
<div class="t rh" style="left:1.3px;width:15px;top:107.60px">1</div>
<div class="r" style="left:1.30px;top:116.20px;width:15.00px;height:1.00px;background:#2a2a2a;"></div>
<div class="t rh" style="left:1.3px;width:15px;top:119.00px">2</div>
<div class="r" style="left:1.30px;top:127.60px;width:15.00px;height:1.00px;background:#2a2a2a;"></div>
<div class="t rh" style="left:1.3px;width:15px;top:130.40px">3</div>
<div class="r" style="left:1.30px;top:139.00px;width:15.00px;height:1.00px;background:#2a2a2a;"></div>
<div class="t rh" style="left:1.3px;width:15px;top:141.80px">4</div>
<div class="r" style="left:1.30px;top:150.40px;width:15.00px;height:1.00px;background:#2a2a2a;"></div>
<div class="t rh" style="left:1.3px;width:15px;top:153.20px">5</div>
<div class="r" style="left:1.30px;top:161.80px;width:15.00px;height:1.00px;background:#2a2a2a;"></div>
<div class="t rh" style="left:1.3px;width:15px;top:164.60px">6</div>
<div class="r" style="left:1.30px;top:173.20px;width:15.00px;height:1.00px;background:#2a2a2a;"></div>
<div class="t rh" style="left:1.3px;width:15px;top:176.00px">7</div>
<div class="r" style="left:1.30px;top:184.60px;width:15.00px;height:1.00px;background:#2a2a2a;"></div>
<div class="t rh" style="left:1.3px;width:15px;top:187.40px">8</div>
<div class="r" style="left:1.30px;top:196.00px;width:15.00px;height:1.00px;background:#2a2a2a;"></div>
<div class="t rh" style="left:1.3px;width:15px;top:198.80px">9</div>
<div class="r" style="left:1.30px;top:207.40px;width:15.00px;height:1.00px;background:#2a2a2a;"></div>
<div class="t rh" style="left:1.3px;width:15px;top:210.20px">10</div>
<div class="r" style="left:1.30px;top:218.80px;width:15.00px;height:1.00px;background:#2a2a2a;"></div>
<div class="t rh" style="left:1.3px;width:15px;top:221.60px">11</div>
<div class="r" style="left:1.30px;top:230.20px;width:15.00px;height:1.00px;background:#2a2a2a;"></div>
<div class="t rh" style="left:1.3px;width:15px;top:233.00px">12</div>
<div class="r" style="left:1.30px;top:241.60px;width:15.00px;height:1.00px;background:#2a2a2a;"></div>
<div class="t rh" style="left:1.3px;width:15px;top:244.40px">13</div>
<div class="r" style="left:1.30px;top:253.00px;width:15.00px;height:1.00px;background:#2a2a2a;"></div>
<div class="t rh" style="left:1.3px;width:15px;top:255.80px">14</div>
<div class="r" style="left:1.30px;top:264.40px;width:15.00px;height:1.00px;background:#2a2a2a;"></div>
<div class="t rh" style="left:1.3px;width:15px;top:267.20px">15</div>
<div class="r" style="left:1.30px;top:275.80px;width:15.00px;height:1.00px;background:#2a2a2a;"></div>
<div class="t rh" style="left:1.3px;width:15px;top:278.60px">16</div>
<div class="r" style="left:1.30px;top:287.20px;width:15.00px;height:1.00px;background:#2a2a2a;"></div>
<div class="t rh" style="left:1.3px;width:15px;top:290.00px">17</div>
<div class="r" style="left:1.30px;top:298.60px;width:15.00px;height:1.00px;background:#2a2a2a;"></div>
<div class="t rh" style="left:1.3px;width:15px;top:301.40px">18</div>
<div class="r" style="left:1.30px;top:310.00px;width:15.00px;height:1.00px;background:#2a2a2a;"></div>
<div class="t rh" style="left:1.3px;width:15px;top:312.80px">19</div>
<div class="r" style="left:1.30px;top:321.40px;width:15.00px;height:1.00px;background:#2a2a2a;"></div>
<div class="t rh" style="left:1.3px;width:15px;top:324.20px">20</div>
<div class="r" style="left:1.30px;top:332.80px;width:15.00px;height:1.00px;background:#2a2a2a;"></div>
<div class="t rh" style="left:1.3px;width:15px;top:335.60px">21</div>
<div class="r" style="left:1.30px;top:344.20px;width:15.00px;height:1.00px;background:#2a2a2a;"></div>
<div class="t rh" style="left:1.3px;width:15px;top:347.00px">22</div>
<div class="r" style="left:1.30px;top:355.60px;width:15.00px;height:1.00px;background:#2a2a2a;"></div>
<div class="t rh" style="left:1.3px;width:15px;top:358.40px">23</div>
<div class="r" style="left:1.30px;top:367.00px;width:15.00px;height:1.00px;background:#2a2a2a;"></div>
<div class="t rh" style="left:1.3px;width:15px;top:369.80px">24</div>
<div class="r" style="left:1.30px;top:378.40px;width:15.00px;height:1.00px;background:#2a2a2a;"></div>
<div class="t rh" style="left:1.3px;width:15px;top:381.20px">25</div>
<div class="r" style="left:1.30px;top:389.80px;width:15.00px;height:1.00px;background:#2a2a2a;"></div>
<div class="t rh" style="left:1.3px;width:15px;top:392.60px">26</div>
<div class="r" style="left:1.30px;top:401.20px;width:15.00px;height:1.00px;background:#2a2a2a;"></div>
<div class="t rh" style="left:1.3px;width:15px;top:404.00px">27</div>
<div class="r" style="left:1.30px;top:412.60px;width:15.00px;height:1.00px;background:#2a2a2a;"></div>
<div class="t rh" style="left:1.3px;width:15px;top:415.40px">28</div>
<div class="r" style="left:1.30px;top:424.00px;width:15.00px;height:1.00px;background:#2a2a2a;"></div>
<div class="t rh" style="left:1.3px;width:15px;top:426.80px">29</div>
<div class="r" style="left:1.30px;top:435.40px;width:15.00px;height:1.00px;background:#2a2a2a;"></div>
<div class="t rh" style="left:1.3px;width:15px;top:438.20px">30</div>
<div class="r" style="left:1.30px;top:446.80px;width:15.00px;height:1.00px;background:#2a2a2a;"></div>
<div class="t rh" style="left:1.3px;width:15px;top:449.60px">31</div>
<div class="r" style="left:1.30px;top:458.20px;width:15.00px;height:1.00px;background:#2a2a2a;"></div>
<div class="t rh" style="left:1.3px;width:15px;top:461.00px">32</div>
<div class="r" style="left:1.30px;top:469.60px;width:15.00px;height:1.00px;background:#2a2a2a;"></div>
<div class="t rh" style="left:1.3px;width:15px;top:472.40px">33</div>
<div class="r" style="left:1.30px;top:481.00px;width:15.00px;height:1.00px;background:#2a2a2a;"></div>
<div class="t rh" style="left:1.3px;width:15px;top:483.80px">34</div>
<div class="r" style="left:1.30px;top:492.40px;width:15.00px;height:1.00px;background:#2a2a2a;"></div>
<div class="t rh" style="left:1.3px;width:15px;top:495.20px">35</div>
<div class="r" style="left:1.30px;top:503.80px;width:15.00px;height:1.00px;background:#2a2a2a;"></div>
<div class="t rh" style="left:1.3px;width:15px;top:506.60px">36</div>
<div class="r" style="left:1.30px;top:515.20px;width:15.00px;height:1.00px;background:#2a2a2a;"></div>
<div class="t rh" style="left:1.3px;width:15px;top:518.00px">37</div>
<div class="r" style="left:1.30px;top:526.60px;width:15.00px;height:1.00px;background:#2a2a2a;"></div>
<div class="t rh" style="left:1.3px;width:15px;top:529.40px">38</div>
<div class="r" style="left:1.30px;top:538.00px;width:15.00px;height:1.00px;background:#2a2a2a;"></div>
<div class="t rh" style="left:1.3px;width:15px;top:540.80px">39</div>
<div class="r" style="left:1.30px;top:549.40px;width:15.00px;height:1.00px;background:#2a2a2a;"></div>
<div class="t rh" style="left:1.3px;width:15px;top:552.20px">40</div>
<div class="r" style="left:1.30px;top:560.80px;width:15.00px;height:1.00px;background:#2a2a2a;"></div>
<div class="t rh" style="left:1.3px;width:15px;top:563.60px">41</div>
<div class="r" style="left:1.30px;top:572.20px;width:15.00px;height:1.00px;background:#2a2a2a;"></div>
<div class="t rh" style="left:1.3px;width:15px;top:575.00px">42</div>
<div class="r" style="left:1.30px;top:583.60px;width:15.00px;height:1.00px;background:#2a2a2a;"></div>
<div class="t rh" style="left:1.3px;width:15px;top:586.40px">43</div>
<div class="r" style="left:16.63px;top:115.00px;width:1030.00px;height:1.00px;background:rgba(0,0,0,0.006);"></div>
<div class="r" style="left:16.63px;top:116.00px;width:1030.00px;height:1.00px;background:rgba(0,0,0,0.114);"></div>
<div class="r" style="left:16.63px;top:117.00px;width:1030.00px;height:1.00px;background:rgba(0,0,0,0.051);"></div>
<div class="r" style="left:16.63px;top:127.00px;width:1030.00px;height:1.00px;background:rgba(0,0,0,0.074);"></div>
<div class="r" style="left:16.63px;top:128.00px;width:1030.00px;height:1.00px;background:rgba(0,0,0,0.097);"></div>
<div class="r" style="left:16.63px;top:138.00px;width:1030.00px;height:1.00px;background:rgba(0,0,0,0.028);"></div>
<div class="r" style="left:16.63px;top:139.00px;width:1030.00px;height:1.00px;background:rgba(0,0,0,0.114);"></div>
<div class="r" style="left:16.63px;top:140.00px;width:1030.00px;height:1.00px;background:rgba(0,0,0,0.028);"></div>
<div class="r" style="left:16.63px;top:150.00px;width:1030.00px;height:1.00px;background:rgba(0,0,0,0.097);"></div>
<div class="r" style="left:16.63px;top:151.00px;width:1030.00px;height:1.00px;background:rgba(0,0,0,0.074);"></div>
<div class="r" style="left:16.63px;top:161.00px;width:1030.00px;height:1.00px;background:rgba(0,0,0,0.051);"></div>
<div class="r" style="left:16.63px;top:162.00px;width:1030.00px;height:1.00px;background:rgba(0,0,0,0.114);"></div>
<div class="r" style="left:16.63px;top:163.00px;width:1030.00px;height:1.00px;background:rgba(0,0,0,0.006);"></div>
<div class="r" style="left:16.63px;top:172.00px;width:1030.00px;height:1.00px;background:rgba(0,0,0,0.006);"></div>
<div class="r" style="left:16.63px;top:173.00px;width:1030.00px;height:1.00px;background:rgba(0,0,0,0.114);"></div>
<div class="r" style="left:16.63px;top:174.00px;width:1030.00px;height:1.00px;background:rgba(0,0,0,0.051);"></div>
<div class="r" style="left:16.63px;top:184.00px;width:1030.00px;height:1.00px;background:rgba(0,0,0,0.074);"></div>
<div class="r" style="left:16.63px;top:185.00px;width:1030.00px;height:1.00px;background:rgba(0,0,0,0.097);"></div>
<div class="r" style="left:16.63px;top:195.00px;width:1030.00px;height:1.00px;background:rgba(0,0,0,0.028);"></div>
<div class="r" style="left:16.63px;top:196.00px;width:1030.00px;height:1.00px;background:rgba(0,0,0,0.114);"></div>
<div class="r" style="left:16.63px;top:197.00px;width:1030.00px;height:1.00px;background:rgba(0,0,0,0.028);"></div>
<div class="r" style="left:16.63px;top:207.00px;width:1030.00px;height:1.00px;background:rgba(0,0,0,0.097);"></div>
<div class="r" style="left:16.63px;top:208.00px;width:1030.00px;height:1.00px;background:rgba(0,0,0,0.074);"></div>
<div class="r" style="left:16.63px;top:218.00px;width:1030.00px;height:1.00px;background:rgba(0,0,0,0.051);"></div>
<div class="r" style="left:16.63px;top:219.00px;width:1030.00px;height:1.00px;background:rgba(0,0,0,0.114);"></div>
<div class="r" style="left:16.63px;top:220.00px;width:1030.00px;height:1.00px;background:rgba(0,0,0,0.006);"></div>
<div class="r" style="left:16.63px;top:229.00px;width:1030.00px;height:1.00px;background:rgba(0,0,0,0.006);"></div>
<div class="r" style="left:16.63px;top:230.00px;width:1030.00px;height:1.00px;background:rgba(0,0,0,0.114);"></div>
<div class="r" style="left:16.63px;top:231.00px;width:1030.00px;height:1.00px;background:rgba(0,0,0,0.051);"></div>
<div class="r" style="left:16.63px;top:241.00px;width:1030.00px;height:1.00px;background:rgba(0,0,0,0.074);"></div>
<div class="r" style="left:16.63px;top:242.00px;width:1030.00px;height:1.00px;background:rgba(0,0,0,0.097);"></div>
<div class="r" style="left:16.63px;top:252.00px;width:1030.00px;height:1.00px;background:rgba(0,0,0,0.028);"></div>
<div class="r" style="left:16.63px;top:253.00px;width:1030.00px;height:1.00px;background:rgba(0,0,0,0.114);"></div>
<div class="r" style="left:16.63px;top:254.00px;width:1030.00px;height:1.00px;background:rgba(0,0,0,0.028);"></div>
<div class="r" style="left:16.63px;top:264.00px;width:1030.00px;height:1.00px;background:rgba(0,0,0,0.097);"></div>
<div class="r" style="left:16.63px;top:265.00px;width:1030.00px;height:1.00px;background:rgba(0,0,0,0.074);"></div>
<div class="r" style="left:16.63px;top:275.00px;width:1030.00px;height:1.00px;background:rgba(0,0,0,0.051);"></div>
<div class="r" style="left:16.63px;top:276.00px;width:1030.00px;height:1.00px;background:rgba(0,0,0,0.114);"></div>
<div class="r" style="left:16.63px;top:277.00px;width:1030.00px;height:1.00px;background:rgba(0,0,0,0.006);"></div>
<div class="r" style="left:16.63px;top:286.00px;width:1030.00px;height:1.00px;background:rgba(0,0,0,0.006);"></div>
<div class="r" style="left:16.63px;top:287.00px;width:1030.00px;height:1.00px;background:rgba(0,0,0,0.114);"></div>
<div class="r" style="left:16.63px;top:288.00px;width:1030.00px;height:1.00px;background:rgba(0,0,0,0.051);"></div>
<div class="r" style="left:16.63px;top:298.00px;width:1030.00px;height:1.00px;background:rgba(0,0,0,0.074);"></div>
<div class="r" style="left:16.63px;top:299.00px;width:1030.00px;height:1.00px;background:rgba(0,0,0,0.097);"></div>
<div class="r" style="left:16.63px;top:309.00px;width:1030.00px;height:1.00px;background:rgba(0,0,0,0.028);"></div>
<div class="r" style="left:16.63px;top:310.00px;width:1030.00px;height:1.00px;background:rgba(0,0,0,0.114);"></div>
<div class="r" style="left:16.63px;top:311.00px;width:1030.00px;height:1.00px;background:rgba(0,0,0,0.028);"></div>
<div class="r" style="left:16.63px;top:321.00px;width:1030.00px;height:1.00px;background:rgba(0,0,0,0.097);"></div>
<div class="r" style="left:16.63px;top:322.00px;width:1030.00px;height:1.00px;background:rgba(0,0,0,0.074);"></div>
<div class="r" style="left:16.63px;top:332.00px;width:1030.00px;height:1.00px;background:rgba(0,0,0,0.051);"></div>
<div class="r" style="left:16.63px;top:333.00px;width:1030.00px;height:1.00px;background:rgba(0,0,0,0.114);"></div>
<div class="r" style="left:16.63px;top:334.00px;width:1030.00px;height:1.00px;background:rgba(0,0,0,0.006);"></div>
<div class="r" style="left:16.63px;top:343.00px;width:1030.00px;height:1.00px;background:rgba(0,0,0,0.006);"></div>
<div class="r" style="left:16.63px;top:344.00px;width:1030.00px;height:1.00px;background:rgba(0,0,0,0.114);"></div>
<div class="r" style="left:16.63px;top:345.00px;width:1030.00px;height:1.00px;background:rgba(0,0,0,0.051);"></div>
<div class="r" style="left:16.63px;top:355.00px;width:1030.00px;height:1.00px;background:rgba(0,0,0,0.074);"></div>
<div class="r" style="left:16.63px;top:356.00px;width:1030.00px;height:1.00px;background:rgba(0,0,0,0.097);"></div>
<div class="r" style="left:16.63px;top:366.00px;width:1030.00px;height:1.00px;background:rgba(0,0,0,0.028);"></div>
<div class="r" style="left:16.63px;top:367.00px;width:1030.00px;height:1.00px;background:rgba(0,0,0,0.114);"></div>
<div class="r" style="left:16.63px;top:368.00px;width:1030.00px;height:1.00px;background:rgba(0,0,0,0.028);"></div>
<div class="r" style="left:16.63px;top:378.00px;width:1030.00px;height:1.00px;background:rgba(0,0,0,0.097);"></div>
<div class="r" style="left:16.63px;top:379.00px;width:1030.00px;height:1.00px;background:rgba(0,0,0,0.074);"></div>
<div class="r" style="left:16.63px;top:389.00px;width:1030.00px;height:1.00px;background:rgba(0,0,0,0.051);"></div>
<div class="r" style="left:16.63px;top:390.00px;width:1030.00px;height:1.00px;background:rgba(0,0,0,0.114);"></div>
<div class="r" style="left:16.63px;top:391.00px;width:1030.00px;height:1.00px;background:rgba(0,0,0,0.006);"></div>
<div class="r" style="left:16.63px;top:400.00px;width:1030.00px;height:1.00px;background:rgba(0,0,0,0.006);"></div>
<div class="r" style="left:16.63px;top:401.00px;width:1030.00px;height:1.00px;background:rgba(0,0,0,0.114);"></div>
<div class="r" style="left:16.63px;top:402.00px;width:1030.00px;height:1.00px;background:rgba(0,0,0,0.051);"></div>
<div class="r" style="left:16.63px;top:412.00px;width:1030.00px;height:1.00px;background:rgba(0,0,0,0.074);"></div>
<div class="r" style="left:16.63px;top:413.00px;width:1030.00px;height:1.00px;background:rgba(0,0,0,0.097);"></div>
<div class="r" style="left:16.63px;top:423.00px;width:1030.00px;height:1.00px;background:rgba(0,0,0,0.028);"></div>
<div class="r" style="left:16.63px;top:424.00px;width:1030.00px;height:1.00px;background:rgba(0,0,0,0.114);"></div>
<div class="r" style="left:16.63px;top:425.00px;width:1030.00px;height:1.00px;background:rgba(0,0,0,0.028);"></div>
<div class="r" style="left:16.63px;top:435.00px;width:1030.00px;height:1.00px;background:rgba(0,0,0,0.097);"></div>
<div class="r" style="left:16.63px;top:436.00px;width:1030.00px;height:1.00px;background:rgba(0,0,0,0.074);"></div>
<div class="r" style="left:16.63px;top:446.00px;width:1030.00px;height:1.00px;background:rgba(0,0,0,0.051);"></div>
<div class="r" style="left:16.63px;top:447.00px;width:1030.00px;height:1.00px;background:rgba(0,0,0,0.114);"></div>
<div class="r" style="left:16.63px;top:448.00px;width:1030.00px;height:1.00px;background:rgba(0,0,0,0.006);"></div>
<div class="r" style="left:16.63px;top:457.00px;width:1030.00px;height:1.00px;background:rgba(0,0,0,0.006);"></div>
<div class="r" style="left:16.63px;top:458.00px;width:1030.00px;height:1.00px;background:rgba(0,0,0,0.114);"></div>
<div class="r" style="left:16.63px;top:459.00px;width:1030.00px;height:1.00px;background:rgba(0,0,0,0.051);"></div>
<div class="r" style="left:16.63px;top:469.00px;width:1030.00px;height:1.00px;background:rgba(0,0,0,0.074);"></div>
<div class="r" style="left:16.63px;top:470.00px;width:1030.00px;height:1.00px;background:rgba(0,0,0,0.097);"></div>
<div class="r" style="left:16.63px;top:480.00px;width:1030.00px;height:1.00px;background:rgba(0,0,0,0.028);"></div>
<div class="r" style="left:16.63px;top:481.00px;width:1030.00px;height:1.00px;background:rgba(0,0,0,0.114);"></div>
<div class="r" style="left:16.63px;top:482.00px;width:1030.00px;height:1.00px;background:rgba(0,0,0,0.028);"></div>
<div class="r" style="left:16.63px;top:492.00px;width:1030.00px;height:1.00px;background:rgba(0,0,0,0.097);"></div>
<div class="r" style="left:16.63px;top:493.00px;width:1030.00px;height:1.00px;background:rgba(0,0,0,0.074);"></div>
<div class="r" style="left:16.63px;top:503.00px;width:1030.00px;height:1.00px;background:rgba(0,0,0,0.051);"></div>
<div class="r" style="left:16.63px;top:504.00px;width:1030.00px;height:1.00px;background:rgba(0,0,0,0.114);"></div>
<div class="r" style="left:16.63px;top:505.00px;width:1030.00px;height:1.00px;background:rgba(0,0,0,0.006);"></div>
<div class="r" style="left:16.63px;top:514.00px;width:1030.00px;height:1.00px;background:rgba(0,0,0,0.006);"></div>
<div class="r" style="left:16.63px;top:515.00px;width:1030.00px;height:1.00px;background:rgba(0,0,0,0.114);"></div>
<div class="r" style="left:16.63px;top:516.00px;width:1030.00px;height:1.00px;background:rgba(0,0,0,0.051);"></div>
<div class="r" style="left:16.63px;top:526.00px;width:1030.00px;height:1.00px;background:rgba(0,0,0,0.074);"></div>
<div class="r" style="left:16.63px;top:527.00px;width:1030.00px;height:1.00px;background:rgba(0,0,0,0.097);"></div>
<div class="r" style="left:16.63px;top:537.00px;width:1030.00px;height:1.00px;background:rgba(0,0,0,0.028);"></div>
<div class="r" style="left:16.63px;top:538.00px;width:1030.00px;height:1.00px;background:rgba(0,0,0,0.114);"></div>
<div class="r" style="left:16.63px;top:539.00px;width:1030.00px;height:1.00px;background:rgba(0,0,0,0.028);"></div>
<div class="r" style="left:16.63px;top:549.00px;width:1030.00px;height:1.00px;background:rgba(0,0,0,0.097);"></div>
<div class="r" style="left:16.63px;top:550.00px;width:1030.00px;height:1.00px;background:rgba(0,0,0,0.074);"></div>
<div class="r" style="left:16.63px;top:560.00px;width:1030.00px;height:1.00px;background:rgba(0,0,0,0.051);"></div>
<div class="r" style="left:16.63px;top:561.00px;width:1030.00px;height:1.00px;background:rgba(0,0,0,0.114);"></div>
<div class="r" style="left:16.63px;top:562.00px;width:1030.00px;height:1.00px;background:rgba(0,0,0,0.006);"></div>
<div class="r" style="left:16.63px;top:571.00px;width:1030.00px;height:1.00px;background:rgba(0,0,0,0.006);"></div>
<div class="r" style="left:16.63px;top:572.00px;width:1030.00px;height:1.00px;background:rgba(0,0,0,0.114);"></div>
<div class="r" style="left:16.63px;top:573.00px;width:1030.00px;height:1.00px;background:rgba(0,0,0,0.051);"></div>
<div class="r" style="left:16.63px;top:583.00px;width:1030.00px;height:1.00px;background:rgba(0,0,0,0.074);"></div>
<div class="r" style="left:16.63px;top:584.00px;width:1030.00px;height:1.00px;background:rgba(0,0,0,0.097);"></div>
<div class="r" style="left:62.00px;top:105.30px;width:1.00px;height:474.70px;background:rgba(0,0,0,0.097);"></div>
<div class="r" style="left:63.00px;top:105.30px;width:1.00px;height:474.70px;background:rgba(0,0,0,0.073);"></div>
<div class="r" style="left:108.00px;top:105.30px;width:1.00px;height:474.70px;background:rgba(0,0,0,0.064);"></div>
<div class="r" style="left:109.00px;top:105.30px;width:1.00px;height:474.70px;background:rgba(0,0,0,0.106);"></div>
<div class="r" style="left:154.00px;top:105.30px;width:1.00px;height:474.70px;background:rgba(0,0,0,0.032);"></div>
<div class="r" style="left:155.00px;top:105.30px;width:1.00px;height:474.70px;background:rgba(0,0,0,0.122);"></div>
<div class="r" style="left:156.00px;top:105.30px;width:1.00px;height:474.70px;background:rgba(0,0,0,0.017);"></div>
<div class="r" style="left:201.00px;top:105.30px;width:1.00px;height:474.70px;background:rgba(0,0,0,0.120);"></div>
<div class="r" style="left:202.00px;top:105.30px;width:1.00px;height:474.70px;background:rgba(0,0,0,0.050);"></div>
<div class="r" style="left:247.00px;top:105.30px;width:1.00px;height:474.70px;background:rgba(0,0,0,0.088);"></div>
<div class="r" style="left:248.00px;top:105.30px;width:1.00px;height:474.70px;background:rgba(0,0,0,0.083);"></div>
<div class="r" style="left:293.00px;top:105.30px;width:1.00px;height:474.70px;background:rgba(0,0,0,0.055);"></div>
<div class="r" style="left:294.00px;top:105.30px;width:1.00px;height:474.70px;background:rgba(0,0,0,0.115);"></div>
<div class="r" style="left:339.00px;top:105.30px;width:1.00px;height:474.70px;background:rgba(0,0,0,0.022);"></div>
<div class="r" style="left:340.00px;top:105.30px;width:1.00px;height:474.70px;background:rgba(0,0,0,0.122);"></div>
<div class="r" style="left:341.00px;top:105.30px;width:1.00px;height:474.70px;background:rgba(0,0,0,0.027);"></div>
<div class="r" style="left:386.00px;top:105.30px;width:1.00px;height:474.70px;background:rgba(0,0,0,0.111);"></div>
<div class="r" style="left:387.00px;top:105.30px;width:1.00px;height:474.70px;background:rgba(0,0,0,0.060);"></div>
<div class="r" style="left:432.00px;top:105.30px;width:1.00px;height:474.70px;background:rgba(0,0,0,0.078);"></div>
<div class="r" style="left:433.00px;top:105.30px;width:1.00px;height:474.70px;background:rgba(0,0,0,0.092);"></div>
<div class="r" style="left:478.00px;top:105.30px;width:1.00px;height:474.70px;background:rgba(0,0,0,0.045);"></div>
<div class="r" style="left:479.00px;top:105.30px;width:1.00px;height:474.70px;background:rgba(0,0,0,0.122);"></div>
<div class="r" style="left:480.00px;top:105.30px;width:1.00px;height:474.70px;background:rgba(0,0,0,0.004);"></div>
<div class="r" style="left:524.00px;top:105.30px;width:1.00px;height:474.70px;background:rgba(0,0,0,0.012);"></div>
<div class="r" style="left:525.00px;top:105.30px;width:1.00px;height:474.70px;background:rgba(0,0,0,0.122);"></div>
<div class="r" style="left:526.00px;top:105.30px;width:1.00px;height:474.70px;background:rgba(0,0,0,0.036);"></div>
<div class="r" style="left:571.00px;top:105.30px;width:1.00px;height:474.70px;background:rgba(0,0,0,0.101);"></div>
<div class="r" style="left:572.00px;top:105.30px;width:1.00px;height:474.70px;background:rgba(0,0,0,0.069);"></div>
<div class="r" style="left:617.00px;top:105.30px;width:1.00px;height:474.70px;background:rgba(0,0,0,0.068);"></div>
<div class="r" style="left:618.00px;top:105.30px;width:1.00px;height:474.70px;background:rgba(0,0,0,0.102);"></div>
<div class="r" style="left:663.00px;top:105.30px;width:1.00px;height:474.70px;background:rgba(0,0,0,0.035);"></div>
<div class="r" style="left:664.00px;top:105.30px;width:1.00px;height:474.70px;background:rgba(0,0,0,0.122);"></div>
<div class="r" style="left:665.00px;top:105.30px;width:1.00px;height:474.70px;background:rgba(0,0,0,0.013);"></div>
<div class="r" style="left:709.00px;top:105.30px;width:1.00px;height:474.70px;background:rgba(0,0,0,0.002);"></div>
<div class="r" style="left:710.00px;top:105.30px;width:1.00px;height:474.70px;background:rgba(0,0,0,0.122);"></div>
<div class="r" style="left:711.00px;top:105.30px;width:1.00px;height:474.70px;background:rgba(0,0,0,0.046);"></div>
<div class="r" style="left:756.00px;top:105.30px;width:1.00px;height:474.70px;background:rgba(0,0,0,0.091);"></div>
<div class="r" style="left:757.00px;top:105.30px;width:1.00px;height:474.70px;background:rgba(0,0,0,0.079);"></div>
<div class="r" style="left:802.00px;top:105.30px;width:1.00px;height:474.70px;background:rgba(0,0,0,0.058);"></div>
<div class="r" style="left:803.00px;top:105.30px;width:1.00px;height:474.70px;background:rgba(0,0,0,0.112);"></div>
<div class="r" style="left:848.00px;top:105.30px;width:1.00px;height:474.70px;background:rgba(0,0,0,0.026);"></div>
<div class="r" style="left:849.00px;top:105.30px;width:1.00px;height:474.70px;background:rgba(0,0,0,0.122);"></div>
<div class="r" style="left:850.00px;top:105.30px;width:1.00px;height:474.70px;background:rgba(0,0,0,0.023);"></div>
<div class="r" style="left:895.00px;top:105.30px;width:1.00px;height:474.70px;background:rgba(0,0,0,0.114);"></div>
<div class="r" style="left:896.00px;top:105.30px;width:1.00px;height:474.70px;background:rgba(0,0,0,0.056);"></div>
<div class="r" style="left:941.00px;top:105.30px;width:1.00px;height:474.70px;background:rgba(0,0,0,0.081);"></div>
<div class="r" style="left:942.00px;top:105.30px;width:1.00px;height:474.70px;background:rgba(0,0,0,0.089);"></div>
<div class="r" style="left:987.00px;top:105.30px;width:1.00px;height:474.70px;background:rgba(0,0,0,0.049);"></div>
<div class="r" style="left:988.00px;top:105.30px;width:1.00px;height:474.70px;background:rgba(0,0,0,0.122);"></div>
<div class="r" style="left:1033.00px;top:105.30px;width:1.00px;height:474.70px;background:rgba(0,0,0,0.016);"></div>
<div class="r" style="left:1034.00px;top:105.30px;width:1.00px;height:474.70px;background:rgba(0,0,0,0.122);"></div>
<div class="r" style="left:1035.00px;top:105.30px;width:1.00px;height:474.70px;background:rgba(0,0,0,0.033);"></div>
<div class="c b" style="left:16.63px;top:105.30px">Region</div>
<div class="c b" style="left:62.90px;top:105.30px">Country</div>
<div class="c b" style="left:109.17px;top:105.30px">Item Type</div>
<div class="c b" style="left:155.44px;top:105.30px">Sales Channel</div>
<div class="c b" style="left:201.71px;top:105.30px">Order Priority</div>
<div class="c b" style="left:247.98px;top:105.30px">Order Date</div>
<div class="c b" style="left:294.25px;top:105.30px">Order ID</div>
<div class="c b" style="left:340.52px;top:105.30px">Ship Date</div>
<div class="c b" style="left:386.79px;top:105.30px">Units Sold</div>
<div class="c b" style="left:433.06px;top:105.30px">Unit Price</div>
<div class="c b" style="left:479.33px;top:105.30px">Unit Cost</div>
<div class="c b" style="left:525.60px;top:105.30px">Total Revenue</div>
<div class="c b" style="left:571.87px;top:105.30px">Total Cost</div>
<div class="c b" style="left:618.14px;top:105.30px">Total Profit</div>
<div class="c" style="left:16.63px;top:116.70px">Sub-Saharan Africa</div>
<div class="c" style="left:62.90px;top:116.70px">Namibia</div>
<div class="c" style="left:109.17px;top:116.70px">Household</div>
<div class="c" style="left:155.44px;top:116.70px">Offline</div>
<div class="c" style="left:201.71px;top:116.70px">M</div>
<div class="c n d" style="left:247.98px;top:116.70px">8/31/2015</div>
<div class="c n rt" style="left:294.25px;top:116.70px">897751939</div>
<div class="c n d rt" style="left:340.52px;top:116.70px">10/12/2015</div>
<div class="c n rt" style="left:386.79px;top:116.70px">3604</div>
<div class="c n" style="left:433.06px;top:116.70px">668,27</div>
<div class="c n" style="left:479.33px;top:116.70px">502,54</div>
<div class="c n" style="left:525.60px;top:116.70px">2408445,08</div>
<div class="c n" style="left:571.87px;top:116.70px">1811154,16</div>
<div class="c n" style="left:618.14px;top:116.70px">597290,92</div>
<div class="c" style="left:16.63px;top:128.10px">Europe</div>
<div class="c" style="left:62.90px;top:128.10px">Iceland</div>
<div class="c" style="left:109.17px;top:128.10px">Baby Food</div>
<div class="c" style="left:155.44px;top:128.10px">Online</div>
<div class="c" style="left:201.71px;top:128.10px">H</div>
<div class="c n d" style="left:247.98px;top:128.10px">11/20/2010</div>
<div class="c n rt" style="left:294.25px;top:128.10px">599480426</div>
<div class="c n d rt" style="left:340.52px;top:128.10px">01/09/2011</div>
<div class="c n rt" style="left:386.79px;top:128.10px">8435</div>
<div class="c n" style="left:433.06px;top:128.10px">255,28</div>
<div class="c n" style="left:479.33px;top:128.10px">159,42</div>
<div class="c n" style="left:525.60px;top:128.10px">2153286,8</div>
<div class="c n" style="left:571.87px;top:128.10px">1344707,7</div>
<div class="c n" style="left:618.14px;top:128.10px">808579,1</div>
<div class="c" style="left:16.63px;top:139.50px">Europe</div>
<div class="c" style="left:62.90px;top:139.50px">Russia</div>
<div class="c" style="left:109.17px;top:139.50px">Meat</div>
<div class="c" style="left:155.44px;top:139.50px">Online</div>
<div class="c" style="left:201.71px;top:139.50px">L</div>
<div class="c n d" style="left:247.98px;top:139.50px">6/22/2017</div>
<div class="c n rt" style="left:294.25px;top:139.50px">538911855</div>
<div class="c n d" style="left:340.52px;top:139.50px">6/25/2017</div>
<div class="c n rt" style="left:386.79px;top:139.50px">4848</div>
<div class="c n" style="left:433.06px;top:139.50px">421,89</div>
<div class="c n" style="left:479.33px;top:139.50px">364,69</div>
<div class="c n" style="left:525.60px;top:139.50px">2045322,72</div>
<div class="c n" style="left:571.87px;top:139.50px">1768017,12</div>
<div class="c n" style="left:618.14px;top:139.50px">277305,6</div>
<div class="c" style="left:16.63px;top:150.90px">Europe</div>
<div class="c" style="left:62.90px;top:150.90px">Moldova</div>
<div class="c" style="left:109.17px;top:150.90px">Meat</div>
<div class="c" style="left:155.44px;top:150.90px">Online</div>
<div class="c" style="left:201.71px;top:150.90px">L</div>
<div class="c n d" style="left:247.98px;top:150.90px">2/28/2012</div>
<div class="c n rt" style="left:294.25px;top:150.90px">459845054</div>
<div class="c n d" style="left:340.52px;top:150.90px">3/20/2012</div>
<div class="c n rt" style="left:386.79px;top:150.90px">7225</div>
<div class="c n" style="left:433.06px;top:150.90px">421,89</div>
<div class="c n" style="left:479.33px;top:150.90px">364,69</div>
<div class="c n" style="left:525.60px;top:150.90px">3048155,25</div>
<div class="c n" style="left:571.87px;top:150.90px">2634885,25</div>
<div class="c n rt" style="left:618.14px;top:150.90px">413270</div>
<div class="c" style="left:16.63px;top:162.30px">Europe</div>
<div class="c" style="left:62.90px;top:162.30px">Malta</div>
<div class="c" style="left:109.17px;top:162.30px">Cereal</div>
<div class="c" style="left:155.44px;top:162.30px">Online</div>
<div class="c" style="left:201.71px;top:162.30px">M</div>
<div class="c n d rt" style="left:247.98px;top:162.30px">08/12/2010</div>
<div class="c n rt" style="left:294.25px;top:162.30px">626391351</div>
<div class="c n d" style="left:340.52px;top:162.30px">9/13/2010</div>
<div class="c n rt" style="left:386.79px;top:162.30px">1975</div>
<div class="c n" style="left:433.06px;top:162.30px">205,7</div>
<div class="c n" style="left:479.33px;top:162.30px">117,11</div>
<div class="c n" style="left:525.60px;top:162.30px">406257,5</div>
<div class="c n" style="left:571.87px;top:162.30px">231292,25</div>
<div class="c n" style="left:618.14px;top:162.30px">174965,25</div>
<div class="c" style="left:16.63px;top:173.70px">Asia</div>
<div class="c" style="left:62.90px;top:173.70px">Indonesia</div>
<div class="c" style="left:109.17px;top:173.70px">Meat</div>
<div class="c" style="left:155.44px;top:173.70px">Online</div>
<div class="c" style="left:201.71px;top:173.70px">H</div>
<div class="c n d" style="left:247.98px;top:173.70px">8/20/2010</div>
<div class="c n rt" style="left:294.25px;top:173.70px">472974574</div>
<div class="c n d" style="left:340.52px;top:173.70px">8/27/2010</div>
<div class="c n rt" style="left:386.79px;top:173.70px">2542</div>
<div class="c n" style="left:433.06px;top:173.70px">421,89</div>
<div class="c n" style="left:479.33px;top:173.70px">364,69</div>
<div class="c n" style="left:525.60px;top:173.70px">1072444,38</div>
<div class="c n" style="left:571.87px;top:173.70px">927041,98</div>
<div class="c n" style="left:618.14px;top:173.70px">145402,4</div>
<div class="c" style="left:16.63px;top:185.10px">Sub-Saharan Africa</div>
<div class="c" style="left:62.90px;top:185.10px">Djibouti</div>
<div class="c" style="left:109.17px;top:185.10px">Household</div>
<div class="c" style="left:155.44px;top:185.10px">Online</div>
<div class="c" style="left:201.71px;top:185.10px">M</div>
<div class="c n d rt" style="left:247.98px;top:185.10px">02/03/2011</div>
<div class="c n rt" style="left:294.25px;top:185.10px">854331052</div>
<div class="c n d rt" style="left:340.52px;top:185.10px">03/03/2011</div>
<div class="c n rt" style="left:386.79px;top:185.10px">4398</div>
<div class="c n" style="left:433.06px;top:185.10px">668,27</div>
<div class="c n" style="left:479.33px;top:185.10px">502,54</div>
<div class="c n" style="left:525.60px;top:185.10px">2939051,46</div>
<div class="c n" style="left:571.87px;top:185.10px">2210170,92</div>
<div class="c n" style="left:618.14px;top:185.10px">728880,54</div>
<div class="c" style="left:16.63px;top:196.50px">Europe</div>
<div class="c" style="left:62.90px;top:196.50px">Greece</div>
<div class="c" style="left:109.17px;top:196.50px">Household</div>
<div class="c" style="left:155.44px;top:196.50px">Online</div>
<div class="c" style="left:201.71px;top:196.50px">L</div>
<div class="c n d rt" style="left:247.98px;top:196.50px">09/11/2015</div>
<div class="c n rt" style="left:294.25px;top:196.50px">895509612</div>
<div class="c n d" style="left:340.52px;top:196.50px">9/26/2015</div>
<div class="c n rt" style="left:386.79px;top:196.50px">49</div>
<div class="c n" style="left:433.06px;top:196.50px">668,27</div>
<div class="c n" style="left:479.33px;top:196.50px">502,54</div>
<div class="c n" style="left:525.60px;top:196.50px">32745,23</div>
<div class="c n" style="left:571.87px;top:196.50px">24624,46</div>
<div class="c n" style="left:618.14px;top:196.50px">8120,77</div>
<div class="c" style="left:16.63px;top:207.90px">Sub-Saharan Africa</div>
<div class="c" style="left:62.90px;top:207.90px">Cameroon</div>
<div class="c" style="left:109.17px;top:207.90px">Cosmetics</div>
<div class="c" style="left:155.44px;top:207.90px">Offline</div>
<div class="c" style="left:201.71px;top:207.90px">M</div>
<div class="c n d" style="left:247.98px;top:207.90px">1/31/2014</div>
<div class="c n rt" style="left:294.25px;top:207.90px">241871583</div>
<div class="c n d rt" style="left:340.52px;top:207.90px">02/04/2014</div>
<div class="c n rt" style="left:386.79px;top:207.90px">4031</div>
<div class="c n" style="left:433.06px;top:207.90px">437,2</div>
<div class="c n" style="left:479.33px;top:207.90px">263,33</div>
<div class="c n" style="left:525.60px;top:207.90px">1762353,2</div>
<div class="c n" style="left:571.87px;top:207.90px">1061483,23</div>
<div class="c n" style="left:618.14px;top:207.90px">700869,97</div>
<div class="c" style="left:16.63px;top:219.30px">Sub-Saharan Africa</div>
<div class="c" style="left:62.90px;top:219.30px">Nigeria</div>
<div class="c" style="left:109.17px;top:219.30px">Cosmetics</div>
<div class="c" style="left:155.44px;top:219.30px">Online</div>
<div class="c" style="left:201.71px;top:219.30px">C</div>
<div class="c n d" style="left:247.98px;top:219.30px">11/21/2015</div>
<div class="c n rt" style="left:294.25px;top:219.30px">409090793</div>
<div class="c n d rt" style="left:340.52px;top:219.30px">12/07/2015</div>
<div class="c n rt" style="left:386.79px;top:219.30px">7911</div>
<div class="c n" style="left:433.06px;top:219.30px">437,2</div>
<div class="c n" style="left:479.33px;top:219.30px">263,33</div>
<div class="c n" style="left:525.60px;top:219.30px">3458689,2</div>
<div class="c n" style="left:571.87px;top:219.30px">2083203,63</div>
<div class="c n" style="left:618.14px;top:219.30px">1375485,57</div>
<div class="c" style="left:16.63px;top:230.70px">Sub-Saharan Africa</div>
<div class="c" style="left:62.90px;top:230.70px">Senegal</div>
<div class="c" style="left:109.17px;top:230.70px">Fruits</div>
<div class="c" style="left:155.44px;top:230.70px">Offline</div>
<div class="c" style="left:201.71px;top:230.70px">M</div>
<div class="c n d" style="left:247.98px;top:230.70px">8/29/2016</div>
<div class="c n rt" style="left:294.25px;top:230.70px">733153569</div>
<div class="c n d rt" style="left:340.52px;top:230.70px">10/05/2016</div>
<div class="c n rt" style="left:386.79px;top:230.70px">5288</div>
<div class="c n" style="left:433.06px;top:230.70px">9,33</div>
<div class="c n" style="left:479.33px;top:230.70px">6,92</div>
<div class="c n" style="left:525.60px;top:230.70px">49337,04</div>
<div class="c n" style="left:571.87px;top:230.70px">36592,96</div>
<div class="c n" style="left:618.14px;top:230.70px">12744,08</div>
<div class="c" style="left:16.63px;top:242.10px">Middle East and North Africa</div>
<div class="c" style="left:62.90px;top:242.10px">Afghanistan</div>
<div class="c" style="left:109.17px;top:242.10px">Cosmetics</div>
<div class="c" style="left:155.44px;top:242.10px">Offline</div>
<div class="c" style="left:201.71px;top:242.10px">L</div>
<div class="c n d" style="left:247.98px;top:242.10px">10/21/2016</div>
<div class="c n rt" style="left:294.25px;top:242.10px">620358741</div>
<div class="c n d rt" style="left:340.52px;top:242.10px">12/01/2016</div>
<div class="c n rt" style="left:386.79px;top:242.10px">6792</div>
<div class="c n" style="left:433.06px;top:242.10px">437,2</div>
<div class="c n" style="left:479.33px;top:242.10px">263,33</div>
<div class="c n" style="left:525.60px;top:242.10px">2969462,4</div>
<div class="c n" style="left:571.87px;top:242.10px">1788537,36</div>
<div class="c n" style="left:618.14px;top:242.10px">1180925,04</div>
<div class="c" style="left:16.63px;top:253.50px">Asia</div>
<div class="c" style="left:62.90px;top:253.50px">India</div>
<div class="c" style="left:109.17px;top:253.50px">Vegetables</div>
<div class="c" style="left:155.44px;top:253.50px">Online</div>
<div class="c" style="left:201.71px;top:253.50px">C</div>
<div class="c n d" style="left:247.98px;top:253.50px">3/21/2010</div>
<div class="c n rt" style="left:294.25px;top:253.50px">897317636</div>
<div class="c n d rt" style="left:340.52px;top:253.50px">04/05/2010</div>
<div class="c n rt" style="left:386.79px;top:253.50px">5084</div>
<div class="c n" style="left:433.06px;top:253.50px">154,06</div>
<div class="c n" style="left:479.33px;top:253.50px">90,93</div>
<div class="c n" style="left:525.60px;top:253.50px">783241,04</div>
<div class="c n" style="left:571.87px;top:253.50px">462288,12</div>
<div class="c n" style="left:618.14px;top:253.50px">320952,92</div>
<div class="c" style="left:16.63px;top:264.90px">Middle East and North Africa</div>
<div class="c" style="left:62.90px;top:264.90px">Lebanon</div>
<div class="c" style="left:109.17px;top:264.90px">Vegetables</div>
<div class="c" style="left:155.44px;top:264.90px">Online</div>
<div class="c" style="left:201.71px;top:264.90px">L</div>
<div class="c n d" style="left:247.98px;top:264.90px">10/15/2010</div>
<div class="c n rt" style="left:294.25px;top:264.90px">660954082</div>
<div class="c n d" style="left:340.52px;top:264.90px">11/19/2010</div>
<div class="c n rt" style="left:386.79px;top:264.90px">9855</div>
<div class="c n" style="left:433.06px;top:264.90px">154,06</div>
<div class="c n" style="left:479.33px;top:264.90px">90,93</div>
<div class="c n" style="left:525.60px;top:264.90px">1518261,3</div>
<div class="c n" style="left:571.87px;top:264.90px">896115,15</div>
<div class="c n" style="left:618.14px;top:264.90px">622146,15</div>
<div class="c" style="left:16.63px;top:276.30px">Middle East and North Africa</div>
<div class="c" style="left:62.90px;top:276.30px">Turkey</div>
<div class="c" style="left:109.17px;top:276.30px">Office Supplies</div>
<div class="c" style="left:155.44px;top:276.30px">Online</div>
<div class="c" style="left:201.71px;top:276.30px">L</div>
<div class="c n d rt" style="left:247.98px;top:276.30px">10/04/2010</div>
<div class="c n rt" style="left:294.25px;top:276.30px">428504407</div>
<div class="c n d" style="left:340.52px;top:276.30px">11/13/2010</div>
<div class="c n rt" style="left:386.79px;top:276.30px">2831</div>
<div class="c n" style="left:433.06px;top:276.30px">651,21</div>
<div class="c n" style="left:479.33px;top:276.30px">524,96</div>
<div class="c n" style="left:525.60px;top:276.30px">1843575,51</div>
<div class="c n" style="left:571.87px;top:276.30px">1486161,76</div>
<div class="c n" style="left:618.14px;top:276.30px">357413,75</div>
<div class="c" style="left:16.63px;top:287.70px">Middle East and North Africa</div>
<div class="c" style="left:62.90px;top:287.70px">Iraq</div>
<div class="c" style="left:109.17px;top:287.70px">Cosmetics</div>
<div class="c" style="left:155.44px;top:287.70px">Offline</div>
<div class="c" style="left:201.71px;top:287.70px">M</div>
<div class="c n d" style="left:247.98px;top:287.70px">10/14/2014</div>
<div class="c n rt" style="left:294.25px;top:287.70px">787517440</div>
<div class="c n d" style="left:340.52px;top:287.70px">10/19/2014</div>
<div class="c n rt" style="left:386.79px;top:287.70px">2766</div>
<div class="c n" style="left:433.06px;top:287.70px">437,2</div>
<div class="c n" style="left:479.33px;top:287.70px">263,33</div>
<div class="c n" style="left:525.60px;top:287.70px">1209295,2</div>
<div class="c n" style="left:571.87px;top:287.70px">728370,78</div>
<div class="c n" style="left:618.14px;top:287.70px">480924,42</div>
<div class="c" style="left:16.63px;top:299.10px">Sub-Saharan Africa</div>
<div class="c" style="left:62.90px;top:299.10px">Rwanda</div>
<div class="c" style="left:109.17px;top:299.10px">Personal Care</div>
<div class="c" style="left:155.44px;top:299.10px">Offline</div>
<div class="c" style="left:201.71px;top:299.10px">M</div>
<div class="c n d" style="left:247.98px;top:299.10px">6/15/2013</div>
<div class="c n rt" style="left:294.25px;top:299.10px">145854508</div>
<div class="c n d rt" style="left:340.52px;top:299.10px">07/08/2013</div>
<div class="c n rt" style="left:386.79px;top:299.10px">445</div>
<div class="c n" style="left:433.06px;top:299.10px">81,73</div>
<div class="c n" style="left:479.33px;top:299.10px">56,67</div>
<div class="c n" style="left:525.60px;top:299.10px">36369,85</div>
<div class="c n" style="left:571.87px;top:299.10px">25218,15</div>
<div class="c n" style="left:618.14px;top:299.10px">11151,7</div>
<div class="c" style="left:16.63px;top:310.50px">Europe</div>
<div class="c" style="left:62.90px;top:310.50px">Ukraine</div>
<div class="c" style="left:109.17px;top:310.50px">Baby Food</div>
<div class="c" style="left:155.44px;top:310.50px">Offline</div>
<div class="c" style="left:201.71px;top:310.50px">M</div>
<div class="c n d rt" style="left:247.98px;top:310.50px">05/07/2017</div>
<div class="c n rt" style="left:294.25px;top:310.50px">581689441</div>
<div class="c n d" style="left:340.52px;top:310.50px">5/29/2017</div>
<div class="c n rt" style="left:386.79px;top:310.50px">3687</div>
<div class="c n" style="left:433.06px;top:310.50px">255,28</div>
<div class="c n" style="left:479.33px;top:310.50px">159,42</div>
<div class="c n" style="left:525.60px;top:310.50px">941217,36</div>
<div class="c n" style="left:571.87px;top:310.50px">587781,54</div>
<div class="c n" style="left:618.14px;top:310.50px">353435,82</div>
<div class="c" style="left:16.63px;top:321.90px">Europe</div>
<div class="c" style="left:62.90px;top:321.90px">Finland</div>
<div class="c" style="left:109.17px;top:321.90px">Office Supplies</div>
<div class="c" style="left:155.44px;top:321.90px">Online</div>
<div class="c" style="left:201.71px;top:321.90px">H</div>
<div class="c n d" style="left:247.98px;top:321.90px">5/21/2015</div>
<div class="c n rt" style="left:294.25px;top:321.90px">193508565</div>
<div class="c n d rt" style="left:340.52px;top:321.90px">07/03/2015</div>
<div class="c n rt" style="left:386.79px;top:321.90px">2339</div>
<div class="c n" style="left:433.06px;top:321.90px">651,21</div>
<div class="c n" style="left:479.33px;top:321.90px">524,96</div>
<div class="c n" style="left:525.60px;top:321.90px">1523180,19</div>
<div class="c n" style="left:571.87px;top:321.90px">1227881,44</div>
<div class="c n" style="left:618.14px;top:321.90px">295298,75</div>
<div class="c" style="left:16.63px;top:333.30px">Sub-Sharan Africa</div>
<div class="c" style="left:62.90px;top:333.30px">South Sudan</div>
<div class="c" style="left:109.17px;top:333.30px">Beverages</div>
<div class="c" style="left:155.44px;top:333.30px">Offline</div>
<div class="c" style="left:201.71px;top:333.30px">H</div>
<div class="c n d" style="left:247.98px;top:333.30px">6/28/2016</div>
<div class="c n rt" style="left:294.25px;top:333.30px">750110709</div>
<div class="c n d" style="left:340.52px;top:333.30px">7/14/2016</div>
<div class="c n rt" style="left:386.79px;top:333.30px">3283</div>
<div class="c n" style="left:433.06px;top:333.30px">47,45</div>
<div class="c n" style="left:479.33px;top:333.30px">31,79</div>
<div class="c n" style="left:525.60px;top:333.30px">155778,35</div>
<div class="c n" style="left:571.87px;top:333.30px">104366,57</div>
<div class="c n" style="left:618.14px;top:333.30px">51411,78</div>
<div class="c" style="left:16.63px;top:344.70px">Central America and the Caribbean</div>
<div class="c" style="left:62.90px;top:344.70px">Antigua and Barbuda</div>
<div class="c" style="left:109.17px;top:344.70px">Fruits</div>
<div class="c" style="left:155.44px;top:344.70px">Offline</div>
<div class="c" style="left:201.71px;top:344.70px">M</div>
<div class="c n d rt" style="left:247.98px;top:344.70px">07/06/2015</div>
<div class="c n rt" style="left:294.25px;top:344.70px">940607202</div>
<div class="c n d rt" style="left:340.52px;top:344.70px">08/12/2015</div>
<div class="c n rt" style="left:386.79px;top:344.70px">5428</div>
<div class="c n" style="left:433.06px;top:344.70px">9,33</div>
<div class="c n" style="left:479.33px;top:344.70px">6,92</div>
<div class="c n" style="left:525.60px;top:344.70px">50643,24</div>
<div class="c n" style="left:571.87px;top:344.70px">37561,76</div>
<div class="c n" style="left:618.14px;top:344.70px">13081,48</div>
<div class="c" style="left:16.63px;top:356.10px">Middle East and North Africa</div>
<div class="c" style="left:62.90px;top:356.10px">Kuwait</div>
<div class="c" style="left:109.17px;top:356.10px">Personal Care</div>
<div class="c" style="left:155.44px;top:356.10px">Online</div>
<div class="c" style="left:201.71px;top:356.10px">C</div>
<div class="c n d" style="left:247.98px;top:356.10px">2/18/2012</div>
<div class="c n rt" style="left:294.25px;top:356.10px">424421870</div>
<div class="c n d" style="left:340.52px;top:356.10px">3/23/2012</div>
<div class="c n rt" style="left:386.79px;top:356.10px">4718</div>
<div class="c n" style="left:433.06px;top:356.10px">81,73</div>
<div class="c n" style="left:479.33px;top:356.10px">56,67</div>
<div class="c n" style="left:525.60px;top:356.10px">385602,14</div>
<div class="c n" style="left:571.87px;top:356.10px">267369,06</div>
<div class="c n" style="left:618.14px;top:356.10px">118233,08</div>
<div class="c" style="left:16.63px;top:367.50px">Europe</div>
<div class="c" style="left:62.90px;top:367.50px">United Kingdom</div>
<div class="c" style="left:109.17px;top:367.50px">Office Supplies</div>
<div class="c" style="left:155.44px;top:367.50px">Offline</div>
<div class="c" style="left:201.71px;top:367.50px">C</div>
<div class="c n d rt" style="left:247.98px;top:367.50px">09/09/2014</div>
<div class="c n rt" style="left:294.25px;top:367.50px">281291043</div>
<div class="c n d" style="left:340.52px;top:367.50px">9/14/2014</div>
<div class="c n rt" style="left:386.79px;top:367.50px">9125</div>
<div class="c n" style="left:433.06px;top:367.50px">651,21</div>
<div class="c n" style="left:479.33px;top:367.50px">524,96</div>
<div class="c n" style="left:525.60px;top:367.50px">5942291,25</div>
<div class="c n rt" style="left:571.87px;top:367.50px">4790260</div>
<div class="c n" style="left:618.14px;top:367.50px">1152031,25</div>
<div class="c" style="left:16.63px;top:378.90px">Central America and the Caribbean</div>
<div class="c" style="left:62.90px;top:378.90px">Saint Kitts and Nevis</div>
<div class="c" style="left:109.17px;top:378.90px">Personal Care</div>
<div class="c" style="left:155.44px;top:378.90px">Online</div>
<div class="c" style="left:201.71px;top:378.90px">C</div>
<div class="c n d" style="left:247.98px;top:378.90px">8/24/2013</div>
<div class="c n rt" style="left:294.25px;top:378.90px">761263549</div>
<div class="c n d" style="left:340.52px;top:378.90px">9/25/2013</div>
<div class="c n rt" style="left:386.79px;top:378.90px">3656</div>
<div class="c n" style="left:433.06px;top:378.90px">81,73</div>
<div class="c n" style="left:479.33px;top:378.90px">56,67</div>
<div class="c n" style="left:525.60px;top:378.90px">298804,88</div>
<div class="c n" style="left:571.87px;top:378.90px">207185,52</div>
<div class="c n" style="left:618.14px;top:378.90px">91619,36</div>
<div class="c" style="left:16.63px;top:390.30px">Central-America and the Caribbean</div>
<div class="c" style="left:62.90px;top:390.30px">Antigua and Barbuda</div>
<div class="c" style="left:109.17px;top:390.30px">Personal Care</div>
<div class="c" style="left:155.44px;top:390.30px">Offline</div>
<div class="c" style="left:201.71px;top:390.30px">M</div>
<div class="c n d rt" style="left:247.98px;top:390.30px">09/04/2015</div>
<div class="c n rt" style="left:294.25px;top:390.30px">834700715</div>
<div class="c n d" style="left:340.52px;top:390.30px">9/16/2015</div>
<div class="c n rt" style="left:386.79px;top:390.30px">5345</div>
<div class="c n" style="left:433.06px;top:390.30px">81,73</div>
<div class="c n" style="left:479.33px;top:390.30px">56,67</div>
<div class="c n" style="left:525.60px;top:390.30px">436846,85</div>
<div class="c n" style="left:571.87px;top:390.30px">302901,15</div>
<div class="c n" style="left:618.14px;top:390.30px">133945,7</div>
<div class="c" style="left:16.63px;top:401.70px">Central America and the Caribbean</div>
<div class="c" style="left:62.90px;top:401.70px">Saint Lucia</div>
<div class="c" style="left:109.17px;top:401.70px">Cosmetics</div>
<div class="c" style="left:155.44px;top:401.70px">Offline</div>
<div class="c" style="left:201.71px;top:401.70px">L</div>
<div class="c n d" style="left:247.98px;top:401.70px">2/26/2017</div>
<div class="c n rt" style="left:294.25px;top:401.70px">442276370</div>
<div class="c n d" style="left:340.52px;top:401.70px">3/28/2017</div>
<div class="c n rt" style="left:386.79px;top:401.70px">8261</div>
<div class="c n" style="left:433.06px;top:401.70px">437,2</div>
<div class="c n" style="left:479.33px;top:401.70px">263,33</div>
<div class="c n" style="left:525.60px;top:401.70px">3611709,2</div>
<div class="c n" style="left:571.87px;top:401.70px">2175369,13</div>
<div class="c n" style="left:618.14px;top:401.70px">1436340,07</div>
<div class="c" style="left:16.63px;top:413.10px">Middle East and North Africa</div>
<div class="c" style="left:62.90px;top:413.10px">Kuwait</div>
<div class="c" style="left:109.17px;top:413.10px">Personal Care</div>
<div class="c" style="left:155.44px;top:413.10px">Offline</div>
<div class="c" style="left:201.71px;top:413.10px">H</div>
<div class="c n d" style="left:247.98px;top:413.10px">7/15/2015</div>
<div class="c n rt" style="left:294.25px;top:413.10px">944976842</div>
<div class="c n d" style="left:340.52px;top:413.10px">8/18/2015</div>
<div class="c n rt" style="left:386.79px;top:413.10px">8502</div>
<div class="c n" style="left:433.06px;top:413.10px">81,73</div>
<div class="c n" style="left:479.33px;top:413.10px">56,67</div>
<div class="c n" style="left:525.60px;top:413.10px">694868,46</div>
<div class="c n" style="left:571.87px;top:413.10px">481808,34</div>
<div class="c n" style="left:618.14px;top:413.10px">213060,12</div>
<div class="c" style="left:16.63px;top:424.50px">Sub-Saharan Africa</div>
<div class="c" style="left:62.90px;top:424.50px">South Sudan</div>
<div class="c" style="left:109.17px;top:424.50px">Office Supplies</div>
<div class="c" style="left:155.44px;top:424.50px">Online</div>
<div class="c" style="left:201.71px;top:424.50px">L</div>
<div class="c n d rt" style="left:247.98px;top:424.50px">02/09/2013</div>
<div class="c n rt" style="left:294.25px;top:424.50px">174100959</div>
<div class="c n d" style="left:340.52px;top:424.50px">2/18/2013</div>
<div class="c n rt" style="left:386.79px;top:424.50px">9197</div>
<div class="c n" style="left:433.06px;top:424.50px">651,21</div>
<div class="c n" style="left:479.33px;top:424.50px">524,96</div>
<div class="c n" style="left:525.60px;top:424.50px">5989178,37</div>
<div class="c n" style="left:571.87px;top:424.50px">4828057,12</div>
<div class="c n" style="left:618.14px;top:424.50px">1161121,25</div>
<div class="c" style="left:16.63px;top:435.90px">Middle East and North Africa</div>
<div class="c" style="left:62.90px;top:435.90px">Tunisia</div>
<div class="c" style="left:109.17px;top:435.90px">Snacks</div>
<div class="c" style="left:155.44px;top:435.90px">Online</div>
<div class="c" style="left:201.71px;top:435.90px">M</div>
<div class="c n d" style="left:247.98px;top:435.90px">3/27/2013</div>
<div class="c n rt" style="left:294.25px;top:435.90px">981260049</div>
<div class="c n d rt" style="left:340.52px;top:435.90px">04/04/2013</div>
<div class="c n rt" style="left:386.79px;top:435.90px">5509</div>
<div class="c n" style="left:433.06px;top:435.90px">152,58</div>
<div class="c n" style="left:479.33px;top:435.90px">97,44</div>
<div class="c n" style="left:525.60px;top:435.90px">840563,22</div>
<div class="c n" style="left:571.87px;top:435.90px">536796,96</div>
<div class="c n" style="left:618.14px;top:435.90px">303766,26</div>
<div class="c" style="left:16.63px;top:447.30px">Middle East and North Africa</div>
<div class="c" style="left:62.90px;top:447.30px">Yemen</div>
<div class="c" style="left:109.17px;top:447.30px">Cereal</div>
<div class="c" style="left:155.44px;top:447.30px">Online</div>
<div class="c" style="left:201.71px;top:447.30px">H</div>
<div class="c n d" style="left:247.98px;top:447.30px">7/23/2016</div>
<div class="c n rt" style="left:294.25px;top:447.30px">888377940</div>
<div class="c n d rt" style="left:340.52px;top:447.30px">08/08/2016</div>
<div class="c n rt" style="left:386.79px;top:447.30px">9629</div>
<div class="c n" style="left:433.06px;top:447.30px">205,7</div>
<div class="c n" style="left:479.33px;top:447.30px">117,11</div>
<div class="c n" style="left:525.60px;top:447.30px">1980685,3</div>
<div class="c n" style="left:571.87px;top:447.30px">1127652,19</div>
<div class="c n" style="left:618.14px;top:447.30px">853033,11</div>
<div class="c" style="left:16.63px;top:458.70px">Sub-Saharan Africa</div>
<div class="c" style="left:62.90px;top:458.70px">Guinea</div>
<div class="c" style="left:109.17px;top:458.70px">Vegetables</div>
<div class="c" style="left:155.44px;top:458.70px">Offline</div>
<div class="c" style="left:201.71px;top:458.70px">L</div>
<div class="c n d" style="left:247.98px;top:458.70px">3/18/2017</div>
<div class="c n rt" style="left:294.25px;top:458.70px">637690961</div>
<div class="c n d" style="left:340.52px;top:458.70px">4/24/2017</div>
<div class="c n rt" style="left:386.79px;top:458.70px">5781</div>
<div class="c n" style="left:433.06px;top:458.70px">154,06</div>
<div class="c n" style="left:479.33px;top:458.70px">90,93</div>
<div class="c n" style="left:525.60px;top:458.70px">890620,86</div>
<div class="c n" style="left:571.87px;top:458.70px">525666,33</div>
<div class="c n" style="left:618.14px;top:458.70px">364954,53</div>
<div class="c" style="left:16.63px;top:470.10px">Australia and Oceania</div>
<div class="c" style="left:62.90px;top:470.10px">Tuvalu</div>
<div class="c" style="left:109.17px;top:470.10px">Household</div>
<div class="c" style="left:155.44px;top:470.10px">Online</div>
<div class="c" style="left:201.71px;top:470.10px">M</div>
<div class="c n d rt" style="left:247.98px;top:470.10px">03/03/2014</div>
<div class="c n rt" style="left:294.25px;top:470.10px">141747939</div>
<div class="c n d rt" style="left:340.52px;top:470.10px">03/10/2014</div>
<div class="c n rt" style="left:386.79px;top:470.10px">5220</div>
<div class="c n" style="left:433.06px;top:470.10px">668,27</div>
<div class="c n" style="left:479.33px;top:470.10px">502,54</div>
<div class="c n" style="left:525.60px;top:470.10px">3488369,4</div>
<div class="c n" style="left:571.87px;top:470.10px">2623258,8</div>
<div class="c n" style="left:618.14px;top:470.10px">865110,6</div>
<div class="c" style="left:16.63px;top:481.50px">Asia</div>
<div class="c" style="left:62.90px;top:481.50px">South Korea</div>
<div class="c" style="left:109.17px;top:481.50px">Cereal</div>
<div class="c" style="left:155.44px;top:481.50px">Offline</div>
<div class="c" style="left:201.71px;top:481.50px">H</div>
<div class="c n d" style="left:247.98px;top:481.50px">1/23/2015</div>
<div class="c n rt" style="left:294.25px;top:481.50px">733410203</div>
<div class="c n d" style="left:340.52px;top:481.50px">2/24/2015</div>
<div class="c n rt" style="left:386.79px;top:481.50px">1232</div>
<div class="c n" style="left:433.06px;top:481.50px">205,7</div>
<div class="c n" style="left:479.33px;top:481.50px">117,11</div>
<div class="c n" style="left:525.60px;top:481.50px">253422,4</div>
<div class="c n" style="left:571.87px;top:481.50px">144279,52</div>
<div class="c n" style="left:618.14px;top:481.50px">109142,88</div>
<div class="c" style="left:16.63px;top:492.90px">Europe</div>
<div class="c" style="left:62.90px;top:492.90px">San Marino</div>
<div class="c" style="left:109.17px;top:492.90px">Meat</div>
<div class="c" style="left:155.44px;top:492.90px">Offline</div>
<div class="c" style="left:201.71px;top:492.90px">L</div>
<div class="c n d" style="left:247.98px;top:492.90px">3/17/2017</div>
<div class="c n rt" style="left:294.25px;top:492.90px">215851581</div>
<div class="c n d" style="left:340.52px;top:492.90px">3/19/2017</div>
<div class="c n rt" style="left:386.79px;top:492.90px">4134</div>
<div class="c n" style="left:433.06px;top:492.90px">421,89</div>
<div class="c n" style="left:479.33px;top:492.90px">364,69</div>
<div class="c n" style="left:525.60px;top:492.90px">1744093,26</div>
<div class="c n" style="left:571.87px;top:492.90px">1507628,46</div>
<div class="c n" style="left:618.14px;top:492.90px">236464,8</div>
<div class="c" style="left:16.63px;top:504.30px">Central America and the Caribbean</div>
<div class="c" style="left:62.90px;top:504.30px">Trinidad and Tobago</div>
<div class="c" style="left:109.17px;top:504.30px">Household</div>
<div class="c" style="left:155.44px;top:504.30px">Online</div>
<div class="c" style="left:201.71px;top:504.30px">L</div>
<div class="c n d rt" style="left:247.98px;top:504.30px">06/08/2011</div>
<div class="c n rt" style="left:294.25px;top:504.30px">512558400</div>
<div class="c n d" style="left:340.52px;top:504.30px">6/29/2011</div>
<div class="c n rt" style="left:386.79px;top:504.30px">6276</div>
<div class="c n" style="left:433.06px;top:504.30px">668,27</div>
<div class="c n" style="left:479.33px;top:504.30px">502,54</div>
<div class="c n" style="left:525.60px;top:504.30px">4194062,52</div>
<div class="c n" style="left:571.87px;top:504.30px">3153941,04</div>
<div class="c n" style="left:618.14px;top:504.30px">1040121,48</div>
<div class="c" style="left:16.63px;top:515.70px">Europe</div>
<div class="c" style="left:62.90px;top:515.70px">Kosovo</div>
<div class="c" style="left:109.17px;top:515.70px">Meat</div>
<div class="c" style="left:155.44px;top:515.70px">Offline</div>
<div class="c" style="left:201.71px;top:515.70px">H</div>
<div class="c n d" style="left:247.98px;top:515.70px">2/14/2016</div>
<div class="c n rt" style="left:294.25px;top:515.70px">917329490</div>
<div class="c n d" style="left:340.52px;top:515.70px">3/18/2016</div>
<div class="c n rt" style="left:386.79px;top:515.70px">7036</div>
<div class="c n" style="left:433.06px;top:515.70px">421,89</div>
<div class="c n" style="left:479.33px;top:515.70px">364,69</div>
<div class="c n" style="left:525.60px;top:515.70px">2968418,04</div>
<div class="c n" style="left:571.87px;top:515.70px">2565958,84</div>
<div class="c n" style="left:618.14px;top:515.70px">402459,2</div>
<div class="c" style="left:16.63px;top:527.10px">Europe</div>
<div class="c" style="left:62.90px;top:527.10px">Hungary</div>
<div class="c" style="left:109.17px;top:527.10px">Personal Care</div>
<div class="c" style="left:155.44px;top:527.10px">Online</div>
<div class="c" style="left:201.71px;top:527.10px">C</div>
<div class="c n d rt" style="left:247.98px;top:527.10px">11/11/2012</div>
<div class="c n rt" style="left:294.25px;top:527.10px">344276177</div>
<div class="c n d" style="left:340.52px;top:527.10px">12/24/2012</div>
<div class="c n rt" style="left:386.79px;top:527.10px">7826</div>
<div class="c n" style="left:433.06px;top:527.10px">81,73</div>
<div class="c n" style="left:479.33px;top:527.10px">56,67</div>
<div class="c n" style="left:525.60px;top:527.10px">639618,98</div>
<div class="c n" style="left:571.87px;top:527.10px">443499,42</div>
<div class="c n" style="left:618.14px;top:527.10px">196119,56</div>
<div class="c" style="left:16.63px;top:538.50px">Sub-Saharan Africa</div>
<div class="c" style="left:62.90px;top:538.50px">Botswana</div>
<div class="c" style="left:109.17px;top:538.50px">Personal Care</div>
<div class="c" style="left:155.44px;top:538.50px">Offline</div>
<div class="c" style="left:201.71px;top:538.50px">M</div>
<div class="c n d" style="left:247.98px;top:538.50px">10/26/2010</div>
<div class="c n rt" style="left:294.25px;top:538.50px">477822291</div>
<div class="c n d rt" style="left:340.52px;top:538.50px">12/10/2010</div>
<div class="c n rt" style="left:386.79px;top:538.50px">7089</div>
<div class="c n" style="left:433.06px;top:538.50px">81,73</div>
<div class="c n" style="left:479.33px;top:538.50px">56,67</div>
<div class="c n" style="left:525.60px;top:538.50px">579383,97</div>
<div class="c n" style="left:571.87px;top:538.50px">401733,63</div>
<div class="c n" style="left:618.14px;top:538.50px">177650,34</div>
<div class="c" style="left:16.63px;top:549.90px">Middle East and North Africa</div>
<div class="c" style="left:62.90px;top:549.90px">Turkey</div>
<div class="c" style="left:109.17px;top:549.90px">Beverages</div>
<div class="c" style="left:155.44px;top:549.90px">Online</div>
<div class="c" style="left:201.71px;top:549.90px">H</div>
<div class="c n d" style="left:247.98px;top:549.90px">8/21/2012</div>
<div class="c n rt" style="left:294.25px;top:549.90px">822704160</div>
<div class="c n d rt" style="left:340.52px;top:549.90px">10/07/2012</div>
<div class="c n rt" style="left:386.79px;top:549.90px">5298</div>
<div class="c n" style="left:433.06px;top:549.90px">47,45</div>
<div class="c n" style="left:479.33px;top:549.90px">31,79</div>
<div class="c n" style="left:525.60px;top:549.90px">251390,1</div>
<div class="c n" style="left:571.87px;top:549.90px">168423,42</div>
<div class="c n" style="left:618.14px;top:549.90px">82966,68</div>
<div class="c" style="left:16.63px;top:561.30px">Europe</div>
<div class="c" style="left:62.90px;top:561.30px">Serbia</div>
<div class="c" style="left:109.17px;top:561.30px">Cosmetics</div>
<div class="c" style="left:155.44px;top:561.30px">Online</div>
<div class="c" style="left:201.71px;top:561.30px">C</div>
<div class="c n d rt" style="left:247.98px;top:561.30px">09/05/2010</div>
<div class="c n rt" style="left:294.25px;top:561.30px">953970611</div>
<div class="c n d" style="left:340.52px;top:561.30px">10/19/2010</div>
<div class="c n rt" style="left:386.79px;top:561.30px">9958</div>
<div class="c n" style="left:433.06px;top:561.30px">437,2</div>
<div class="c n" style="left:479.33px;top:561.30px">263,33</div>
<div class="c n" style="left:525.60px;top:561.30px">4353637,6</div>
<div class="c n" style="left:571.87px;top:561.30px">2622240,14</div>
<div class="c n" style="left:618.14px;top:561.30px">1731397,46</div>
<svg class="r" style="left:210.5px;top:185.5px" width="10" height="11" viewBox="0 0 10 11"><path d="M3.8 0.6 H6.2 V4.3 H9.4 V6.7 H6.2 V10.4 H3.8 V6.7 H0.6 V4.3 H3.8 Z" fill="#fff" stroke="#6a6a6a" stroke-width="0.9"/></svg>
</div></body></html>
